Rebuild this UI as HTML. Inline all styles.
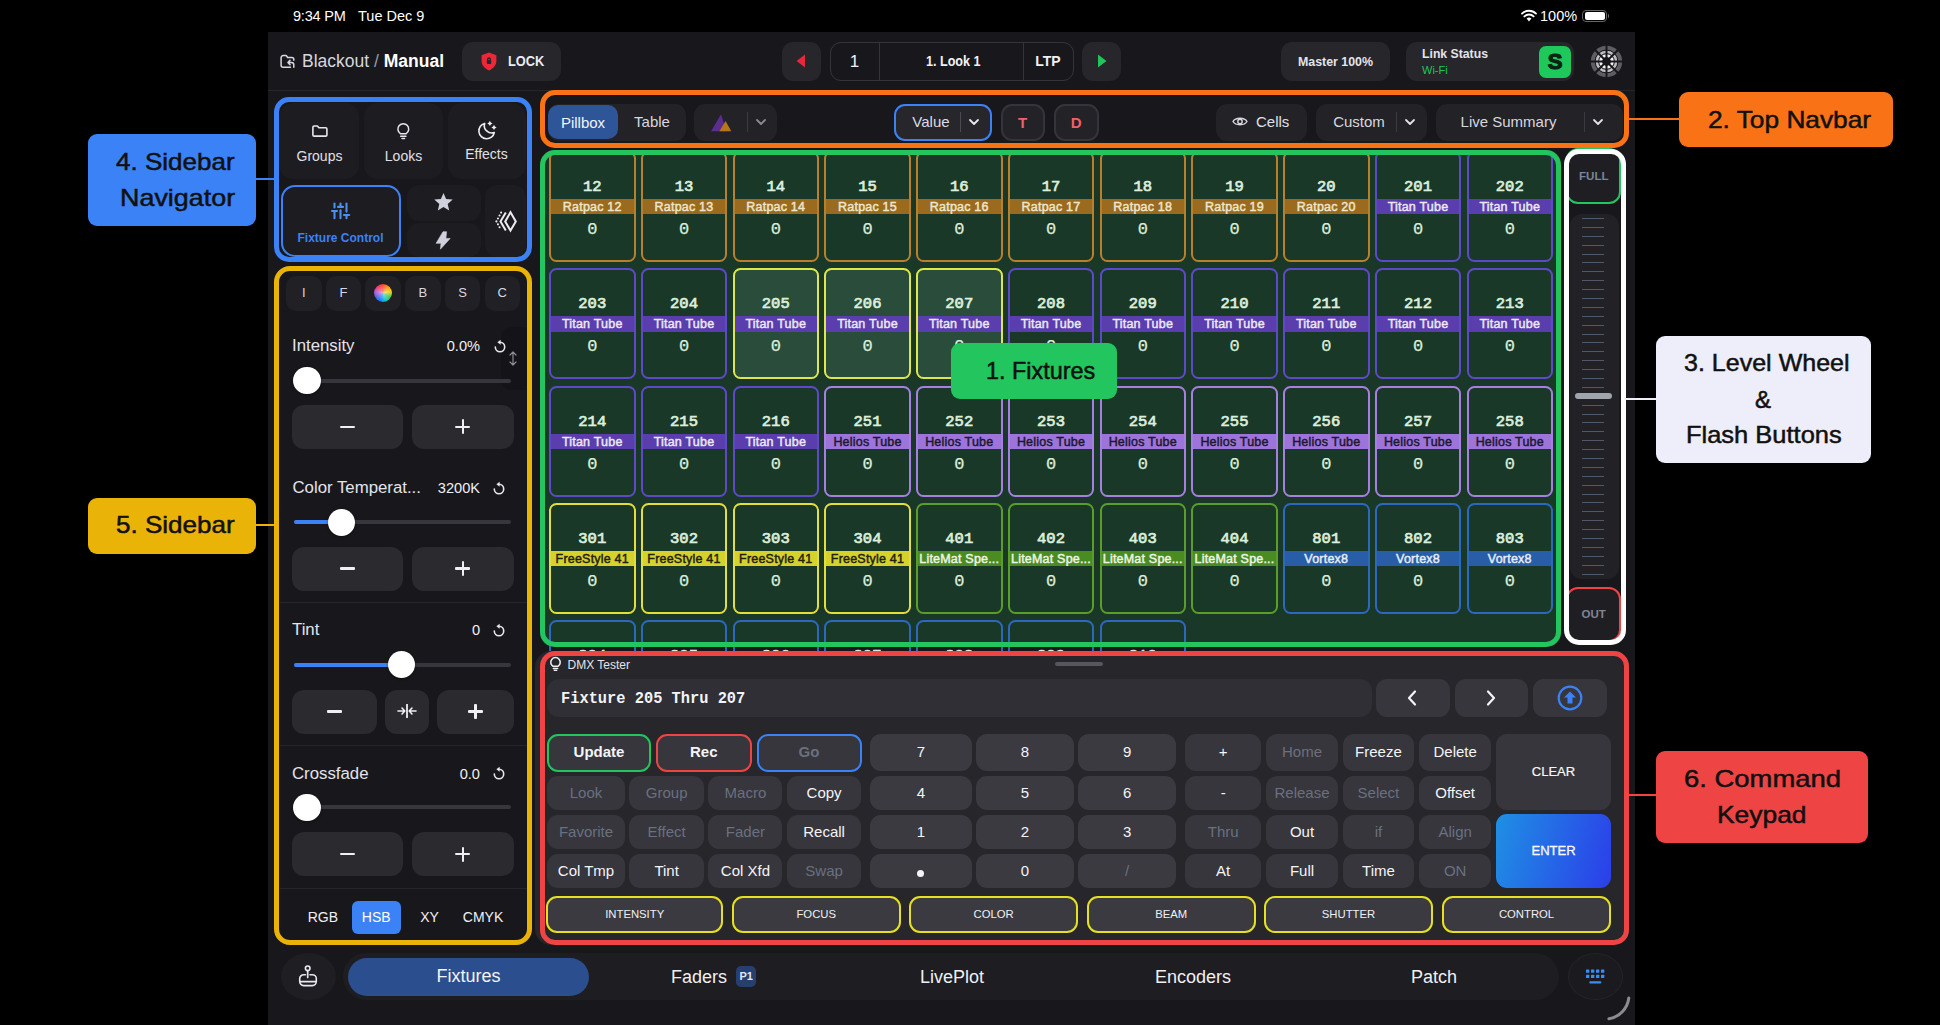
<!DOCTYPE html><html><head><meta charset="utf-8"><style>
*{margin:0;padding:0;box-sizing:border-box}
html,body{width:1940px;height:1025px;overflow:hidden;background:#000;font-family:"Liberation Sans",sans-serif;color:#fff;-webkit-font-smoothing:antialiased}
.a{position:absolute;box-sizing:border-box}
.c{display:flex;align-items:center;justify-content:center;white-space:nowrap}
.l{white-space:nowrap}
.m{font-family:"Liberation Mono",monospace}
svg{position:absolute;overflow:visible}
</style></head><body><div class="a l" style="left:293px;top:1.0px;height:30px;line-height:30px;font-size:14.5px;letter-spacing:-0.2px">9:34 PM</div>
<div class="a l" style="left:358px;top:1.0px;height:30px;line-height:30px;font-size:14.5px">Tue Dec 9</div>
<div class="a l" style="left:1540px;top:1.0px;height:30px;line-height:30px;font-size:14.5px">100%</div>
<svg style="left:1521px;top:9px" width="16" height="13" viewBox="0 0 16 13"><path d="M8 12.5 L5.6 9.6 A3.6 3.6 0 0 1 10.4 9.6 Z" fill="#fff"/><path d="M3.4 7.4 A6.6 6.6 0 0 1 12.6 7.4" stroke="#fff" stroke-width="1.9" fill="none" stroke-linecap="round"/><path d="M1 4.6 A10 10 0 0 1 15 4.6" stroke="#fff" stroke-width="1.9" fill="none" stroke-linecap="round"/></svg>
<div class="a" style="left:1582px;top:9.5px;width:25px;height:12.5px;border:1.3px solid #666;border-radius:4px"></div>
<div class="a" style="left:1584.5px;top:12px;width:20.0px;height:7.5px;background:#fff;border-radius:2px"></div>
<div class="a" style="left:1607.5px;top:13.5px;width:1.5px;height:4.0px;background:#666;border-radius:0 1px 1px 0"></div>
<div class="a" style="left:268px;top:32px;width:1367px;height:993px;background:#18181c"></div>
<div class="a" style="left:268px;top:90px;width:1367px;height:1px;background:#25252a"></div>
<svg style="left:279px;top:53px" width="17" height="17" viewBox="0 0 17 17"><path d="M11.5 14.3 H4.1 A2 2 0 0 1 2.1 12.3 V4.6 A2 2 0 0 1 4.1 2.6 H6.6 A1.5 1.5 0 0 1 7.8 3.2 L8.6 4.6 H12.8 A2 2 0 0 1 14.8 6.6 V7.2" stroke="#d8d8e2" stroke-width="1.5" fill="none" stroke-linejoin="round" stroke-linecap="round"/><path d="M14.8 14.3 V11.8 A2.3 2.3 0 0 0 12.5 9.5 H9 M11 7.4 L8.9 9.5 L11 11.6" stroke="#d8d8e2" stroke-width="1.5" fill="none" stroke-linecap="round" stroke-linejoin="round"/></svg>
<div class="a l" style="left:302px;top:46.0px;height:30px;line-height:30px;font-size:17.5px;color:#d6d6de">Blackout <span style="color:#9a9aa2">/</span> <b style="color:#fff">Manual</b></div>
<div class="a" style="left:462px;top:42px;width:99px;height:39px;background:#26262b;border-radius:11px"></div>
<svg style="left:481px;top:52px" width="16" height="19" viewBox="0 0 16 19"><path d="M8 0.6 L15.4 3.2 V9 C15.4 13.2 12.4 16.6 8 18.4 C3.6 16.6 0.6 13.2 0.6 9 V3.2 Z" fill="#ec2838"/><path d="M6.6 8.2 V7.4 A1.4 1.4 0 0 1 9.4 7.4 V8.2" stroke="#26262b" stroke-width="1.3" fill="none"/><rect x="5.8" y="7.9" width="4.4" height="4" rx="0.9" fill="#26262b"/></svg>
<div class="a l" style="left:507.5px;top:41.2px;height:40px;line-height:40px;font-size:14px;font-weight:bold;color:#ececf2;transform-origin:0 50%;transform:scaleX(0.9150)">LOCK</div>
<div class="a" style="left:782px;top:42px;width:39px;height:39px;background:#26262b;border-radius:11px"></div>
<svg style="left:796px;top:54px" width="10" height="14" viewBox="0 0 10 14"><path d="M9 0.5 V13.5 L0.5 7 Z" fill="#e5283a"/></svg>
<div class="a" style="left:829.5px;top:42px;width:244.5px;height:39px;border:1.2px solid #34343a;border-radius:11px"></div>
<div class="a" style="left:878.6px;top:42px;width:1.1999999999999318px;height:39px;background:#34343a"></div>
<div class="a" style="left:1023px;top:42px;width:1.2000000000000455px;height:39px;background:#34343a"></div>
<div class="a l" style="left:704.6px;width:300px;text-align:center;top:46.5px;height:30px;line-height:30px;font-size:17px;color:#f0f0f4">1</div>
<div class="a l" style="left:926px;top:41.0px;height:40px;line-height:40px;font-size:14px;font-weight:bold;color:#f0f0f4;transform-origin:0 50%;transform:scaleX(0.8980)">1. Look 1</div>
<div class="a l" style="left:898.0px;width:300px;text-align:center;top:46.0px;height:30px;line-height:30px;font-size:14px;font-weight:bold;color:#f0f0f4">LTP</div>
<div class="a" style="left:1082px;top:42px;width:39px;height:39px;background:#26262b;border-radius:11px"></div>
<svg style="left:1097px;top:54px" width="10" height="14" viewBox="0 0 10 14"><path d="M1 0.5 V13.5 L9.5 7 Z" fill="#1fc45a"/></svg>
<div class="a" style="left:1281px;top:42px;width:109px;height:39px;background:#26262b;border-radius:11px"></div>
<div class="a l" style="left:1298px;top:41.5px;height:40px;line-height:40px;font-size:13px;font-weight:bold;color:#e4e4ea;transform-origin:0 50%;transform:scaleX(0.9520)">Master 100%</div>
<div class="a" style="left:1406px;top:42px;width:168px;height:39px;background:#26262b;border-radius:11px"></div>
<div class="a l" style="left:1421.5px;top:46.3px;height:16px;line-height:16px;font-size:13px;font-weight:bold;color:#e4e4ea;transform-origin:0 50%;transform:scaleX(0.9418)">Link Status</div>
<div class="a l" style="left:1422px;top:63.0px;height:14px;line-height:14px;font-size:11px;color:#22c55e">Wi-Fi</div>
<div class="a c" style="left:1539px;top:45.5px;width:32px;height:32.0px;background:#1ec85a;border-radius:7px;font-size:22px;font-weight:bold;color:#0a2414;-webkit-text-stroke:1.2px #0a2414;padding-top:1px">S</div>
<svg style="left:1590px;top:45px" width="33" height="33" viewBox="0 0 33 33">
<circle cx="16.5" cy="16.5" r="13.6" fill="none" stroke="#5e5e62" stroke-width="4.2"/>
<circle cx="16.5" cy="16.5" r="9.6" fill="none" stroke="#bdbdc2" stroke-width="3.2"/>
<circle cx="16.5" cy="16.5" r="6" fill="none" stroke="#f4f4f6" stroke-width="3.2"/>
<g stroke="#18181c" stroke-width="2">
<line x1="16.5" y1="0" x2="16.5" y2="33"/><line x1="0" y1="16.5" x2="33" y2="16.5"/>
<line x1="4.8" y1="4.8" x2="28.2" y2="28.2"/><line x1="28.2" y1="4.8" x2="4.8" y2="28.2"/>
</g>
<circle cx="16.5" cy="16.5" r="11.4" fill="none" stroke="#18181c" stroke-width="1"/>
<circle cx="16.5" cy="16.5" r="7.9" fill="none" stroke="#18181c" stroke-width="0.8"/>
<circle cx="16.5" cy="16.5" r="3.8" fill="#18181c"/>
</svg>
<div class="a" style="left:548px;top:103.5px;width:138px;height:37.0px;background:#222227;border-radius:11px"></div>
<div class="a c" style="left:548px;top:105px;width:70px;height:34px;background:#2d5597;border-radius:10px;font-size:15px;color:#f2f4fa">Pillbox</div>
<div class="a l" style="left:502.0px;width:300px;text-align:center;top:107.0px;height:30px;line-height:30px;font-size:15px;color:#d8d8de">Table</div>
<div class="a" style="left:694px;top:103.5px;width:83px;height:37.0px;background:#222227;border-radius:11px"></div>
<svg style="left:710px;top:113px" width="23" height="20" viewBox="0 0 23 20"><path d="M1.1 18.2 L11 1.3 L16.6 18.2 Z" fill="#5b2d8e"/><path d="M9.4 18.2 L15.6 7.9 L21.3 18.2 Z" fill="#b8761c"/></svg>
<div class="a" style="left:746.5px;top:112px;width:1.0px;height:20px;background:#3a3a40"></div>
<svg style="left:756px;top:119px" width="10" height="6" viewBox="0 0 10 6"><path d="M1 1 L5 5 L9 1" stroke="#8a8a92" stroke-width="1.8" fill="none" stroke-linecap="round" stroke-linejoin="round"/></svg>
<div class="a" style="left:894px;top:103.5px;width:98px;height:37.0px;background:#26262b;border:2px solid #3b82f6;border-radius:11px"></div>
<div class="a l" style="left:781.0px;width:300px;text-align:center;top:107.0px;height:30px;line-height:30px;font-size:15px;color:#dcdce2">Value</div>
<div class="a" style="left:959.5px;top:112px;width:1.0px;height:20px;background:#4a4a50"></div>
<svg style="left:969px;top:119px" width="10" height="6" viewBox="0 0 10 6"><path d="M1 1 L5 5 L9 1" stroke="#e8e8ee" stroke-width="1.8" fill="none" stroke-linecap="round" stroke-linejoin="round"/></svg>
<div class="a c" style="left:1000.5px;top:103.5px;width:44.0px;height:37.0px;background:#222227;border:2px solid #34343a;border-radius:11px;font-size:15px;font-weight:bold;color:#f0606a">T</div>
<div class="a c" style="left:1053.5px;top:103.5px;width:45.5px;height:37.0px;background:#222227;border:2px solid #34343a;border-radius:11px;font-size:15px;font-weight:bold;color:#f0606a">D</div>
<div class="a" style="left:1216px;top:103.5px;width:91px;height:37.0px;background:#222227;border-radius:11px"></div>
<svg style="left:1232px;top:116px" width="16" height="11" viewBox="0 0 16 11"><path d="M1 5.5 C3.5 1.2 12.5 1.2 15 5.5 C12.5 9.8 3.5 9.8 1 5.5 Z" stroke="#d8d8de" stroke-width="1.4" fill="none"/><circle cx="8" cy="5.5" r="2.2" stroke="#d8d8de" stroke-width="1.4" fill="none"/></svg>
<div class="a l" style="left:1256px;top:107.0px;height:30px;line-height:30px;font-size:15px;color:#e0e0e6">Cells</div>
<div class="a" style="left:1316px;top:103.5px;width:111px;height:37.0px;background:#222227;border-radius:11px"></div>
<div class="a l" style="left:1209.0px;width:300px;text-align:center;top:107.0px;height:30px;line-height:30px;font-size:15px;color:#d8d8de">Custom</div>
<div class="a" style="left:1395.5px;top:112px;width:1.0px;height:20px;background:#3a3a40"></div>
<svg style="left:1405px;top:119px" width="10" height="6" viewBox="0 0 10 6"><path d="M1 1 L5 5 L9 1" stroke="#e0e0e6" stroke-width="1.8" fill="none" stroke-linecap="round" stroke-linejoin="round"/></svg>
<div class="a" style="left:1436px;top:103.5px;width:187px;height:37.0px;background:#222227;border-radius:11px"></div>
<div class="a l" style="left:1358.5px;width:300px;text-align:center;top:107.0px;height:30px;line-height:30px;font-size:15px;color:#d8d8de">Live Summary</div>
<div class="a" style="left:1583.5px;top:112px;width:1.0px;height:20px;background:#3a3a40"></div>
<svg style="left:1593px;top:119px" width="10" height="6" viewBox="0 0 10 6"><path d="M1 1 L5 5 L9 1" stroke="#e0e0e6" stroke-width="1.8" fill="none" stroke-linecap="round" stroke-linejoin="round"/></svg>
<div class="a" style="left:279px;top:103px;width:79.5px;height:76px;background:#1c1c21;border-radius:14px"></div>
<div class="a" style="left:364px;top:103px;width:79px;height:76px;background:#1c1c21;border-radius:14px"></div>
<div class="a" style="left:447.5px;top:103px;width:78.5px;height:76px;background:#1c1c21;border-radius:14px"></div>
<svg style="left:310px;top:123px" width="19" height="16" viewBox="0 0 19 16"><path d="M2.9 4.2 A1.2 1.2 0 0 1 4.1 3 H7.4 L8.9 4.8 H15.7 A1.2 1.2 0 0 1 16.9 6 V11.9 A1.2 1.2 0 0 1 15.7 13.1 H4.1 A1.2 1.2 0 0 1 2.9 11.9 Z" stroke="#e6e6ee" stroke-width="1.6" fill="none" stroke-linejoin="round"/></svg>
<div class="a l" style="left:169.5px;width:300px;text-align:center;top:140.5px;height:30px;line-height:30px;font-size:14px;color:#e0e0e6">Groups</div>
<svg style="left:395px;top:121px" width="17" height="20" viewBox="0 0 17 20"><path d="M5.4 12.7 A5.4 5.4 0 1 1 11.2 12.7 Z" stroke="#e6e6ee" stroke-width="1.5" fill="none" stroke-linejoin="round"/><path d="M5.6 15.3 H11 M7 17.5 H9.6" stroke="#e6e6ee" stroke-width="1.4" stroke-linecap="round"/></svg>
<div class="a l" style="left:253.5px;width:300px;text-align:center;top:140.5px;height:30px;line-height:30px;font-size:14px;color:#e0e0e6">Looks</div>
<svg style="left:474px;top:116px" width="26" height="26" viewBox="0 0 26 26"><path d="M10.65 7.4 A7.8 7.8 0 1 0 20.3 16.5 A7.4 7.4 0 0 1 10.65 7.4 Z" stroke="#ececf2" stroke-width="1.6" fill="none" stroke-linejoin="round"/><path d="M15.9 4.800000000000001 Q16.45 6.8500000000000005 18.5 7.4 Q16.45 7.95 15.9 10.0 Q15.35 7.95 13.3 7.4 Q15.35 6.8500000000000005 15.9 4.800000000000001 Z M20 8.8 Q20.55 10.85 22.6 11.4 Q20.55 11.950000000000001 20 14.0 Q19.45 11.950000000000001 17.4 11.4 Q19.45 10.85 20 8.8 Z" fill="#ececf2"/></svg>
<div class="a l" style="left:336.5px;width:300px;text-align:center;top:138.5px;height:30px;line-height:30px;font-size:14px;color:#e0e0e6">Effects</div>
<div class="a" style="left:280.5px;top:184.5px;width:120.0px;height:72.0px;background:#1c1c21;border:2px solid #3b82f6;border-radius:14px"></div>
<svg style="left:330px;top:202px" width="21" height="18" viewBox="0 0 21 18"><g stroke="#4a90f8" stroke-width="2.1" stroke-linecap="round"><line x1="4.5" y1="1.6" x2="4.5" y2="5.4"/><line x1="2" y1="9" x2="7" y2="9"/><line x1="4.5" y1="9" x2="4.5" y2="16.2"/><line x1="10.5" y1="1.6" x2="10.5" y2="4.8"/><line x1="8" y1="4.9" x2="13" y2="4.9"/><line x1="10.5" y1="8.4" x2="10.5" y2="16.2"/><line x1="16.5" y1="1.6" x2="16.5" y2="9.6"/><line x1="14" y1="13" x2="19.2" y2="13"/><line x1="16.5" y1="13" x2="16.5" y2="16.2"/></g></svg>
<div class="a l" style="left:190.5px;width:300px;text-align:center;top:222.5px;height:30px;line-height:30px;font-size:12px;font-weight:bold;color:#3b82f6">Fixture Control</div>
<div class="a" style="left:406.5px;top:185px;width:74.0px;height:36px;background:#1c1c21;border-radius:12px"></div>
<div class="a" style="left:406.5px;top:222.5px;width:74.0px;height:34.0px;background:#1c1c21;border-radius:12px"></div>
<svg style="left:432.5px;top:192px" width="21" height="20" viewBox="-0.5 -0.5 21 20"><path d="M10 0.5 L12.6 6.6 L19.2 7.1 L14.2 11.4 L15.7 17.9 L10 14.4 L4.3 17.9 L5.8 11.4 L0.8 7.1 L7.4 6.6 Z" fill="#d0d0dc"/></svg>
<svg style="left:434px;top:230px" width="18" height="21" viewBox="0 0 18 21"><path d="M9.0 1.7 L12.6 1.7 L11.9 8.4 L16.2 8.4 L6.4 19.2 L7.0 13.3 L2.1 13.3 Z" fill="#d0d0dc" stroke="#d0d0dc" stroke-width="0.6" stroke-linejoin="round"/></svg>
<div class="a" style="left:485px;top:185px;width:41px;height:71.5px;background:#1c1c21;border-radius:12px"></div>
<svg style="left:494px;top:210px" width="24" height="24" viewBox="0 0 24 24"><path d="M16.5 2.3 L21.8 11.4 L16.5 20.5 L11.2 11.4 Z" stroke="#ececf2" stroke-width="2" fill="none" stroke-linejoin="miter"/><path d="M11.8 2.4 L6.5 11.4 L11.8 20.4" stroke="#ececf2" stroke-width="2" fill="none"/><path d="M7.1 2.6 L2.4 11.4 L7.1 20.2" stroke="#ececf2" stroke-width="2.1" fill="none" stroke-linecap="round" stroke-dasharray="0 3.33"/></svg>
<div class="a" style="left:286.0px;top:275.5px;width:35.5px;height:35.0px;background:#202025;border-radius:10px"></div>
<div class="a l" style="left:153.75px;width:300px;text-align:center;top:278.0px;height:30px;line-height:30px;font-size:13px;color:#d8d8e0">I</div>
<div class="a" style="left:325.7px;top:275.5px;width:35.5px;height:35.0px;background:#202025;border-radius:10px"></div>
<div class="a l" style="left:193.45px;width:300px;text-align:center;top:278.0px;height:30px;line-height:30px;font-size:13px;color:#d8d8e0">F</div>
<div class="a" style="left:365.4px;top:275.5px;width:35.5px;height:35.0px;background:#202025;border-radius:10px"></div>
<div class="a" style="left:405.1px;top:275.5px;width:35.5px;height:35.0px;background:#202025;border-radius:10px"></div>
<div class="a l" style="left:272.85px;width:300px;text-align:center;top:278.0px;height:30px;line-height:30px;font-size:13px;color:#d8d8e0">B</div>
<div class="a" style="left:444.8px;top:275.5px;width:35.5px;height:35.0px;background:#202025;border-radius:10px"></div>
<div class="a l" style="left:312.55px;width:300px;text-align:center;top:278.0px;height:30px;line-height:30px;font-size:13px;color:#d8d8e0">S</div>
<div class="a" style="left:484.5px;top:275.5px;width:35.5px;height:35.0px;background:#202025;border-radius:10px"></div>
<div class="a l" style="left:352.25px;width:300px;text-align:center;top:278.0px;height:30px;line-height:30px;font-size:13px;color:#d8d8e0">C</div>
<div class="a" style="left:374px;top:284px;width:18px;height:18px;border-radius:50%;background:conic-gradient(from 0deg,#ff3b30,#ff9500,#ffcc00,#34c759,#00c7be,#007aff,#5856d6,#af52de,#ff2d55,#ff3b30)"></div>
<div class="a" style="left:374px;top:284px;width:18px;height:18px;border-radius:50%;background:radial-gradient(circle,rgba(255,255,255,0.55) 0%,rgba(255,255,255,0) 70%)"></div>
<div class="a" style="left:501px;top:327px;width:27px;height:63px;background:#141418;border-radius:10px 0 0 10px"></div>
<svg style="left:509px;top:351px" width="8" height="15" viewBox="0 0 8 15"><path d="M1 4 L4 1 L7 4 M4 1 V14 M1 11 L4 14 L7 11" stroke="#8a8a92" stroke-width="1.2" fill="none" stroke-linecap="round" stroke-linejoin="round"/></svg>
<div class="a l" style="left:292px;top:331.0px;height:30px;line-height:30px;font-size:16.8px;color:#e4e4ea">Intensity</div>
<div class="a l" style="left:280px;width:200px;text-align:right;top:331.0px;height:30px;line-height:30px;font-size:14.6px;color:#f0f0f4">0.0%</div>
<svg style="left:493.5px;top:339.5px" width="12" height="13" viewBox="0 0 12 13"><path d="M1.3 7 A4.7 4.7 0 1 0 6 2.3" stroke="#e8e8ee" stroke-width="1.6" fill="none" stroke-linecap="round"/><path d="M3.4 2.3 L6.6 -0.2 L6.6 4.8 Z" fill="#e8e8ee"/></svg>
<div class="a" style="left:294px;top:378.5px;width:217px;height:4.0px;background:#36363c;border-radius:2px"></div>
<div class="a" style="left:293.3px;top:366.8px;width:27.4px;height:27.4px;border-radius:50%;background:#fff;box-shadow:0 1px 3px rgba(0,0,0,0.4)"></div>
<div class="a" style="left:292px;top:404.5px;width:111px;height:44.5px;background:#2a2a2f;border-radius:12px"></div>
<div class="a" style="left:411.5px;top:404.5px;width:102.5px;height:44.5px;background:#2a2a2f;border-radius:12px"></div>
<div class="a" style="left:340.0px;top:425.65px;width:15px;height:2.2px;background:#f0f0f4;border-radius:1px"></div>
<div class="a" style="left:455.25px;top:425.65px;width:15px;height:2.2px;background:#f0f0f4;border-radius:1px"></div><div class="a" style="left:461.65px;top:419.25px;width:2.2px;height:15px;background:#f0f0f4;border-radius:1px"></div>
<div class="a l" style="left:292.5px;top:473.0px;height:30px;line-height:30px;font-size:16.8px;color:#e4e4ea">Color Temperat...</div>
<div class="a l" style="left:280px;width:200px;text-align:right;top:473.0px;height:30px;line-height:30px;font-size:14.6px;color:#f0f0f4">3200K</div>
<svg style="left:493px;top:481.5px" width="12" height="13" viewBox="0 0 12 13"><path d="M1.3 7 A4.7 4.7 0 1 0 6 2.3" stroke="#e8e8ee" stroke-width="1.6" fill="none" stroke-linecap="round"/><path d="M3.4 2.3 L6.6 -0.2 L6.6 4.8 Z" fill="#e8e8ee"/></svg>
<div class="a" style="left:294px;top:520.3px;width:217px;height:4.0px;background:#36363c;border-radius:2px"></div>
<div class="a" style="left:294px;top:520.3px;width:47.19999999999999px;height:4.0px;background:#3b82f6;border-radius:2px"></div>
<div class="a" style="left:327.5px;top:508.59999999999997px;width:27.4px;height:27.4px;border-radius:50%;background:#fff;box-shadow:0 1px 3px rgba(0,0,0,0.4)"></div>
<div class="a" style="left:292px;top:546.5px;width:111px;height:44.0px;background:#2a2a2f;border-radius:12px"></div>
<div class="a" style="left:411.5px;top:546.5px;width:102.5px;height:44.0px;background:#2a2a2f;border-radius:12px"></div>
<div class="a" style="left:340.0px;top:567.4px;width:15px;height:2.2px;background:#f0f0f4;border-radius:1px"></div>
<div class="a" style="left:455.25px;top:567.4px;width:15px;height:2.2px;background:#f0f0f4;border-radius:1px"></div><div class="a" style="left:461.65px;top:561.0px;width:2.2px;height:15px;background:#f0f0f4;border-radius:1px"></div>
<div class="a" style="left:280px;top:602px;width:247px;height:1px;background:#25252b"></div>
<div class="a l" style="left:292px;top:615.0px;height:30px;line-height:30px;font-size:16.8px;color:#e4e4ea">Tint</div>
<div class="a l" style="left:280px;width:200px;text-align:right;top:615.0px;height:30px;line-height:30px;font-size:14.6px;color:#f0f0f4">0</div>
<svg style="left:493px;top:623.5px" width="12" height="13" viewBox="0 0 12 13"><path d="M1.3 7 A4.7 4.7 0 1 0 6 2.3" stroke="#e8e8ee" stroke-width="1.6" fill="none" stroke-linecap="round"/><path d="M3.4 2.3 L6.6 -0.2 L6.6 4.8 Z" fill="#e8e8ee"/></svg>
<div class="a" style="left:294px;top:662.6px;width:217px;height:4.0px;background:#36363c;border-radius:2px"></div>
<div class="a" style="left:294px;top:662.6px;width:107.19999999999999px;height:4.0px;background:#3b82f6;border-radius:2px"></div>
<div class="a" style="left:387.5px;top:650.9px;width:27.4px;height:27.4px;border-radius:50%;background:#fff;box-shadow:0 1px 3px rgba(0,0,0,0.4)"></div>
<div class="a" style="left:292px;top:689.5px;width:85px;height:44.0px;background:#2a2a2f;border-radius:12px"></div>
<div class="a" style="left:385px;top:689.5px;width:43.5px;height:44.0px;background:#2a2a2f;border-radius:12px"></div>
<div class="a" style="left:437px;top:689.5px;width:77px;height:44.0px;background:#2a2a2f;border-radius:12px"></div>
<div class="a" style="left:327.0px;top:710.4px;width:15px;height:2.2px;background:#f0f0f4;border-radius:1px"></div>
<div class="a" style="left:468.0px;top:710.4px;width:15px;height:2.2px;background:#f0f0f4;border-radius:1px"></div><div class="a" style="left:474.4px;top:704.0px;width:2.2px;height:15px;background:#f0f0f4;border-radius:1px"></div>
<svg style="left:397px;top:703px" width="20" height="16" viewBox="0 0 20 16"><path d="M10 1 V15" stroke="#f0f0f4" stroke-width="1.8"/><path d="M1 8 H7.5 M5 5 L7.8 8 L5 11 M19 8 H12.5 M15 5 L12.2 8 L15 11" stroke="#f0f0f4" stroke-width="1.6" fill="none" stroke-linecap="round" stroke-linejoin="round"/></svg>
<div class="a" style="left:280px;top:745px;width:247px;height:1px;background:#25252b"></div>
<div class="a l" style="left:292px;top:758.5px;height:30px;line-height:30px;font-size:16.8px;color:#e4e4ea">Crossfade</div>
<div class="a l" style="left:280px;width:200px;text-align:right;top:758.5px;height:30px;line-height:30px;font-size:14.6px;color:#f0f0f4">0.0</div>
<svg style="left:493px;top:767px" width="12" height="13" viewBox="0 0 12 13"><path d="M1.3 7 A4.7 4.7 0 1 0 6 2.3" stroke="#e8e8ee" stroke-width="1.6" fill="none" stroke-linecap="round"/><path d="M3.4 2.3 L6.6 -0.2 L6.6 4.8 Z" fill="#e8e8ee"/></svg>
<div class="a" style="left:294px;top:805.3px;width:217px;height:4.0px;background:#36363c;border-radius:2px"></div>
<div class="a" style="left:293.3px;top:793.5999999999999px;width:27.4px;height:27.4px;border-radius:50%;background:#fff;box-shadow:0 1px 3px rgba(0,0,0,0.4)"></div>
<div class="a" style="left:292px;top:832px;width:111px;height:44px;background:#2a2a2f;border-radius:12px"></div>
<div class="a" style="left:411.5px;top:832px;width:102.5px;height:44px;background:#2a2a2f;border-radius:12px"></div>
<div class="a" style="left:340.0px;top:852.9px;width:15px;height:2.2px;background:#f0f0f4;border-radius:1px"></div>
<div class="a" style="left:455.25px;top:852.9px;width:15px;height:2.2px;background:#f0f0f4;border-radius:1px"></div><div class="a" style="left:461.65px;top:846.5px;width:2.2px;height:15px;background:#f0f0f4;border-radius:1px"></div>
<div class="a" style="left:280px;top:888px;width:247px;height:1px;background:#25252b"></div>
<div class="a l" style="left:172.8px;width:300px;text-align:center;top:901.5px;height:30px;line-height:30px;font-size:14px;color:#f0f0f4">RGB</div>
<div class="a c" style="left:351.5px;top:900.5px;width:49.5px;height:33.0px;background:#3b82f6;border-radius:6px;font-size:14px;color:#fff">HSB</div>
<div class="a l" style="left:279.5px;width:300px;text-align:center;top:901.5px;height:30px;line-height:30px;font-size:14px;color:#f0f0f4">XY</div>
<div class="a l" style="left:333.0px;width:300px;text-align:center;top:901.5px;height:30px;line-height:30px;font-size:14px;color:#f0f0f4">CMYK</div>
<div class="a" style="left:540px;top:150px;width:1021px;height:497px;background:#1a3828;border-radius:14px"></div>
<div class="a" style="left:540px;top:155px;width:1021px;height:496px;overflow:hidden">
<div class="a" style="left:9.0px;top:-4.199999999999989px;width:86.5px;height:111px;border:2px solid #b8802a;border-radius:7.5px;"><div class="a m" style="left:0;right:0;top:22px;height:24px;line-height:24px;text-align:center;font-size:15.5px;color:#dcefdc;-webkit-text-stroke:0.7px #dcefdc">12</div><div class="a" style="left:0;right:0;top:46px;height:15.4px;line-height:16.6px;text-align:center;font-size:12.5px;letter-spacing:0.2px;background:#9a6b1f;color:#ede6cc;-webkit-text-stroke:0.45px #ede6cc;white-space:nowrap;overflow:hidden">Ratpac 12</div><div class="a m" style="left:0;right:0;top:65.2px;height:24px;line-height:24px;text-align:center;font-size:17px;color:#dcefdc;-webkit-text-stroke:0.25px #dcefdc">0</div></div>
<div class="a" style="left:100.75px;top:-4.199999999999989px;width:86.5px;height:111px;border:2px solid #b8802a;border-radius:7.5px;"><div class="a m" style="left:0;right:0;top:22px;height:24px;line-height:24px;text-align:center;font-size:15.5px;color:#dcefdc;-webkit-text-stroke:0.7px #dcefdc">13</div><div class="a" style="left:0;right:0;top:46px;height:15.4px;line-height:16.6px;text-align:center;font-size:12.5px;letter-spacing:0.2px;background:#9a6b1f;color:#ede6cc;-webkit-text-stroke:0.45px #ede6cc;white-space:nowrap;overflow:hidden">Ratpac 13</div><div class="a m" style="left:0;right:0;top:65.2px;height:24px;line-height:24px;text-align:center;font-size:17px;color:#dcefdc;-webkit-text-stroke:0.25px #dcefdc">0</div></div>
<div class="a" style="left:192.5px;top:-4.199999999999989px;width:86.5px;height:111px;border:2px solid #b8802a;border-radius:7.5px;"><div class="a m" style="left:0;right:0;top:22px;height:24px;line-height:24px;text-align:center;font-size:15.5px;color:#dcefdc;-webkit-text-stroke:0.7px #dcefdc">14</div><div class="a" style="left:0;right:0;top:46px;height:15.4px;line-height:16.6px;text-align:center;font-size:12.5px;letter-spacing:0.2px;background:#9a6b1f;color:#ede6cc;-webkit-text-stroke:0.45px #ede6cc;white-space:nowrap;overflow:hidden">Ratpac 14</div><div class="a m" style="left:0;right:0;top:65.2px;height:24px;line-height:24px;text-align:center;font-size:17px;color:#dcefdc;-webkit-text-stroke:0.25px #dcefdc">0</div></div>
<div class="a" style="left:284.25px;top:-4.199999999999989px;width:86.5px;height:111px;border:2px solid #b8802a;border-radius:7.5px;"><div class="a m" style="left:0;right:0;top:22px;height:24px;line-height:24px;text-align:center;font-size:15.5px;color:#dcefdc;-webkit-text-stroke:0.7px #dcefdc">15</div><div class="a" style="left:0;right:0;top:46px;height:15.4px;line-height:16.6px;text-align:center;font-size:12.5px;letter-spacing:0.2px;background:#9a6b1f;color:#ede6cc;-webkit-text-stroke:0.45px #ede6cc;white-space:nowrap;overflow:hidden">Ratpac 15</div><div class="a m" style="left:0;right:0;top:65.2px;height:24px;line-height:24px;text-align:center;font-size:17px;color:#dcefdc;-webkit-text-stroke:0.25px #dcefdc">0</div></div>
<div class="a" style="left:376.0px;top:-4.199999999999989px;width:86.5px;height:111px;border:2px solid #b8802a;border-radius:7.5px;"><div class="a m" style="left:0;right:0;top:22px;height:24px;line-height:24px;text-align:center;font-size:15.5px;color:#dcefdc;-webkit-text-stroke:0.7px #dcefdc">16</div><div class="a" style="left:0;right:0;top:46px;height:15.4px;line-height:16.6px;text-align:center;font-size:12.5px;letter-spacing:0.2px;background:#9a6b1f;color:#ede6cc;-webkit-text-stroke:0.45px #ede6cc;white-space:nowrap;overflow:hidden">Ratpac 16</div><div class="a m" style="left:0;right:0;top:65.2px;height:24px;line-height:24px;text-align:center;font-size:17px;color:#dcefdc;-webkit-text-stroke:0.25px #dcefdc">0</div></div>
<div class="a" style="left:467.75px;top:-4.199999999999989px;width:86.5px;height:111px;border:2px solid #b8802a;border-radius:7.5px;"><div class="a m" style="left:0;right:0;top:22px;height:24px;line-height:24px;text-align:center;font-size:15.5px;color:#dcefdc;-webkit-text-stroke:0.7px #dcefdc">17</div><div class="a" style="left:0;right:0;top:46px;height:15.4px;line-height:16.6px;text-align:center;font-size:12.5px;letter-spacing:0.2px;background:#9a6b1f;color:#ede6cc;-webkit-text-stroke:0.45px #ede6cc;white-space:nowrap;overflow:hidden">Ratpac 17</div><div class="a m" style="left:0;right:0;top:65.2px;height:24px;line-height:24px;text-align:center;font-size:17px;color:#dcefdc;-webkit-text-stroke:0.25px #dcefdc">0</div></div>
<div class="a" style="left:559.5px;top:-4.199999999999989px;width:86.5px;height:111px;border:2px solid #b8802a;border-radius:7.5px;"><div class="a m" style="left:0;right:0;top:22px;height:24px;line-height:24px;text-align:center;font-size:15.5px;color:#dcefdc;-webkit-text-stroke:0.7px #dcefdc">18</div><div class="a" style="left:0;right:0;top:46px;height:15.4px;line-height:16.6px;text-align:center;font-size:12.5px;letter-spacing:0.2px;background:#9a6b1f;color:#ede6cc;-webkit-text-stroke:0.45px #ede6cc;white-space:nowrap;overflow:hidden">Ratpac 18</div><div class="a m" style="left:0;right:0;top:65.2px;height:24px;line-height:24px;text-align:center;font-size:17px;color:#dcefdc;-webkit-text-stroke:0.25px #dcefdc">0</div></div>
<div class="a" style="left:651.25px;top:-4.199999999999989px;width:86.5px;height:111px;border:2px solid #b8802a;border-radius:7.5px;"><div class="a m" style="left:0;right:0;top:22px;height:24px;line-height:24px;text-align:center;font-size:15.5px;color:#dcefdc;-webkit-text-stroke:0.7px #dcefdc">19</div><div class="a" style="left:0;right:0;top:46px;height:15.4px;line-height:16.6px;text-align:center;font-size:12.5px;letter-spacing:0.2px;background:#9a6b1f;color:#ede6cc;-webkit-text-stroke:0.45px #ede6cc;white-space:nowrap;overflow:hidden">Ratpac 19</div><div class="a m" style="left:0;right:0;top:65.2px;height:24px;line-height:24px;text-align:center;font-size:17px;color:#dcefdc;-webkit-text-stroke:0.25px #dcefdc">0</div></div>
<div class="a" style="left:743.0px;top:-4.199999999999989px;width:86.5px;height:111px;border:2px solid #b8802a;border-radius:7.5px;"><div class="a m" style="left:0;right:0;top:22px;height:24px;line-height:24px;text-align:center;font-size:15.5px;color:#dcefdc;-webkit-text-stroke:0.7px #dcefdc">20</div><div class="a" style="left:0;right:0;top:46px;height:15.4px;line-height:16.6px;text-align:center;font-size:12.5px;letter-spacing:0.2px;background:#9a6b1f;color:#ede6cc;-webkit-text-stroke:0.45px #ede6cc;white-space:nowrap;overflow:hidden">Ratpac 20</div><div class="a m" style="left:0;right:0;top:65.2px;height:24px;line-height:24px;text-align:center;font-size:17px;color:#dcefdc;-webkit-text-stroke:0.25px #dcefdc">0</div></div>
<div class="a" style="left:834.75px;top:-4.199999999999989px;width:86.5px;height:111px;border:2px solid #5e4ac8;border-radius:7.5px;"><div class="a m" style="left:0;right:0;top:22px;height:24px;line-height:24px;text-align:center;font-size:15.5px;color:#dcefdc;-webkit-text-stroke:0.7px #dcefdc">201</div><div class="a" style="left:0;right:0;top:46px;height:15.4px;line-height:16.6px;text-align:center;font-size:12.5px;letter-spacing:0.2px;background:#5a3eae;color:#ece8f6;-webkit-text-stroke:0.45px #ece8f6;white-space:nowrap;overflow:hidden">Titan Tube</div><div class="a m" style="left:0;right:0;top:65.2px;height:24px;line-height:24px;text-align:center;font-size:17px;color:#dcefdc;-webkit-text-stroke:0.25px #dcefdc">0</div></div>
<div class="a" style="left:926.5px;top:-4.199999999999989px;width:86.5px;height:111px;border:2px solid #5e4ac8;border-radius:7.5px;"><div class="a m" style="left:0;right:0;top:22px;height:24px;line-height:24px;text-align:center;font-size:15.5px;color:#dcefdc;-webkit-text-stroke:0.7px #dcefdc">202</div><div class="a" style="left:0;right:0;top:46px;height:15.4px;line-height:16.6px;text-align:center;font-size:12.5px;letter-spacing:0.2px;background:#5a3eae;color:#ece8f6;-webkit-text-stroke:0.45px #ece8f6;white-space:nowrap;overflow:hidden">Titan Tube</div><div class="a m" style="left:0;right:0;top:65.2px;height:24px;line-height:24px;text-align:center;font-size:17px;color:#dcefdc;-webkit-text-stroke:0.25px #dcefdc">0</div></div>
<div class="a" style="left:9.0px;top:113.14999999999998px;width:86.5px;height:111px;border:2px solid #5e4ac8;border-radius:7.5px;"><div class="a m" style="left:0;right:0;top:22px;height:24px;line-height:24px;text-align:center;font-size:15.5px;color:#dcefdc;-webkit-text-stroke:0.7px #dcefdc">203</div><div class="a" style="left:0;right:0;top:46px;height:15.4px;line-height:16.6px;text-align:center;font-size:12.5px;letter-spacing:0.2px;background:#5a3eae;color:#ece8f6;-webkit-text-stroke:0.45px #ece8f6;white-space:nowrap;overflow:hidden">Titan Tube</div><div class="a m" style="left:0;right:0;top:65.2px;height:24px;line-height:24px;text-align:center;font-size:17px;color:#dcefdc;-webkit-text-stroke:0.25px #dcefdc">0</div></div>
<div class="a" style="left:100.75px;top:113.14999999999998px;width:86.5px;height:111px;border:2px solid #5e4ac8;border-radius:7.5px;"><div class="a m" style="left:0;right:0;top:22px;height:24px;line-height:24px;text-align:center;font-size:15.5px;color:#dcefdc;-webkit-text-stroke:0.7px #dcefdc">204</div><div class="a" style="left:0;right:0;top:46px;height:15.4px;line-height:16.6px;text-align:center;font-size:12.5px;letter-spacing:0.2px;background:#5a3eae;color:#ece8f6;-webkit-text-stroke:0.45px #ece8f6;white-space:nowrap;overflow:hidden">Titan Tube</div><div class="a m" style="left:0;right:0;top:65.2px;height:24px;line-height:24px;text-align:center;font-size:17px;color:#dcefdc;-webkit-text-stroke:0.25px #dcefdc">0</div></div>
<div class="a" style="left:192.5px;top:113.14999999999998px;width:86.5px;height:111px;border:2px solid #dde64a;border-radius:7.5px;background:#2a4c3a;"><div class="a m" style="left:0;right:0;top:22px;height:24px;line-height:24px;text-align:center;font-size:15.5px;color:#dcefdc;-webkit-text-stroke:0.7px #dcefdc">205</div><div class="a" style="left:0;right:0;top:46px;height:15.4px;line-height:16.6px;text-align:center;font-size:12.5px;letter-spacing:0.2px;background:#5a3eae;color:#ece8f6;-webkit-text-stroke:0.45px #ece8f6;white-space:nowrap;overflow:hidden">Titan Tube</div><div class="a m" style="left:0;right:0;top:65.2px;height:24px;line-height:24px;text-align:center;font-size:17px;color:#dcefdc;-webkit-text-stroke:0.25px #dcefdc">0</div></div>
<div class="a" style="left:284.25px;top:113.14999999999998px;width:86.5px;height:111px;border:2px solid #dde64a;border-radius:7.5px;background:#2a4c3a;"><div class="a m" style="left:0;right:0;top:22px;height:24px;line-height:24px;text-align:center;font-size:15.5px;color:#dcefdc;-webkit-text-stroke:0.7px #dcefdc">206</div><div class="a" style="left:0;right:0;top:46px;height:15.4px;line-height:16.6px;text-align:center;font-size:12.5px;letter-spacing:0.2px;background:#5a3eae;color:#ece8f6;-webkit-text-stroke:0.45px #ece8f6;white-space:nowrap;overflow:hidden">Titan Tube</div><div class="a m" style="left:0;right:0;top:65.2px;height:24px;line-height:24px;text-align:center;font-size:17px;color:#dcefdc;-webkit-text-stroke:0.25px #dcefdc">0</div></div>
<div class="a" style="left:376.0px;top:113.14999999999998px;width:86.5px;height:111px;border:2px solid #dde64a;border-radius:7.5px;background:#2a4c3a;"><div class="a m" style="left:0;right:0;top:22px;height:24px;line-height:24px;text-align:center;font-size:15.5px;color:#dcefdc;-webkit-text-stroke:0.7px #dcefdc">207</div><div class="a" style="left:0;right:0;top:46px;height:15.4px;line-height:16.6px;text-align:center;font-size:12.5px;letter-spacing:0.2px;background:#5a3eae;color:#ece8f6;-webkit-text-stroke:0.45px #ece8f6;white-space:nowrap;overflow:hidden">Titan Tube</div><div class="a m" style="left:0;right:0;top:65.2px;height:24px;line-height:24px;text-align:center;font-size:17px;color:#dcefdc;-webkit-text-stroke:0.25px #dcefdc">0</div></div>
<div class="a" style="left:467.75px;top:113.14999999999998px;width:86.5px;height:111px;border:2px solid #5e4ac8;border-radius:7.5px;"><div class="a m" style="left:0;right:0;top:22px;height:24px;line-height:24px;text-align:center;font-size:15.5px;color:#dcefdc;-webkit-text-stroke:0.7px #dcefdc">208</div><div class="a" style="left:0;right:0;top:46px;height:15.4px;line-height:16.6px;text-align:center;font-size:12.5px;letter-spacing:0.2px;background:#5a3eae;color:#ece8f6;-webkit-text-stroke:0.45px #ece8f6;white-space:nowrap;overflow:hidden">Titan Tube</div><div class="a m" style="left:0;right:0;top:65.2px;height:24px;line-height:24px;text-align:center;font-size:17px;color:#dcefdc;-webkit-text-stroke:0.25px #dcefdc">0</div></div>
<div class="a" style="left:559.5px;top:113.14999999999998px;width:86.5px;height:111px;border:2px solid #5e4ac8;border-radius:7.5px;"><div class="a m" style="left:0;right:0;top:22px;height:24px;line-height:24px;text-align:center;font-size:15.5px;color:#dcefdc;-webkit-text-stroke:0.7px #dcefdc">209</div><div class="a" style="left:0;right:0;top:46px;height:15.4px;line-height:16.6px;text-align:center;font-size:12.5px;letter-spacing:0.2px;background:#5a3eae;color:#ece8f6;-webkit-text-stroke:0.45px #ece8f6;white-space:nowrap;overflow:hidden">Titan Tube</div><div class="a m" style="left:0;right:0;top:65.2px;height:24px;line-height:24px;text-align:center;font-size:17px;color:#dcefdc;-webkit-text-stroke:0.25px #dcefdc">0</div></div>
<div class="a" style="left:651.25px;top:113.14999999999998px;width:86.5px;height:111px;border:2px solid #5e4ac8;border-radius:7.5px;"><div class="a m" style="left:0;right:0;top:22px;height:24px;line-height:24px;text-align:center;font-size:15.5px;color:#dcefdc;-webkit-text-stroke:0.7px #dcefdc">210</div><div class="a" style="left:0;right:0;top:46px;height:15.4px;line-height:16.6px;text-align:center;font-size:12.5px;letter-spacing:0.2px;background:#5a3eae;color:#ece8f6;-webkit-text-stroke:0.45px #ece8f6;white-space:nowrap;overflow:hidden">Titan Tube</div><div class="a m" style="left:0;right:0;top:65.2px;height:24px;line-height:24px;text-align:center;font-size:17px;color:#dcefdc;-webkit-text-stroke:0.25px #dcefdc">0</div></div>
<div class="a" style="left:743.0px;top:113.14999999999998px;width:86.5px;height:111px;border:2px solid #5e4ac8;border-radius:7.5px;"><div class="a m" style="left:0;right:0;top:22px;height:24px;line-height:24px;text-align:center;font-size:15.5px;color:#dcefdc;-webkit-text-stroke:0.7px #dcefdc">211</div><div class="a" style="left:0;right:0;top:46px;height:15.4px;line-height:16.6px;text-align:center;font-size:12.5px;letter-spacing:0.2px;background:#5a3eae;color:#ece8f6;-webkit-text-stroke:0.45px #ece8f6;white-space:nowrap;overflow:hidden">Titan Tube</div><div class="a m" style="left:0;right:0;top:65.2px;height:24px;line-height:24px;text-align:center;font-size:17px;color:#dcefdc;-webkit-text-stroke:0.25px #dcefdc">0</div></div>
<div class="a" style="left:834.75px;top:113.14999999999998px;width:86.5px;height:111px;border:2px solid #5e4ac8;border-radius:7.5px;"><div class="a m" style="left:0;right:0;top:22px;height:24px;line-height:24px;text-align:center;font-size:15.5px;color:#dcefdc;-webkit-text-stroke:0.7px #dcefdc">212</div><div class="a" style="left:0;right:0;top:46px;height:15.4px;line-height:16.6px;text-align:center;font-size:12.5px;letter-spacing:0.2px;background:#5a3eae;color:#ece8f6;-webkit-text-stroke:0.45px #ece8f6;white-space:nowrap;overflow:hidden">Titan Tube</div><div class="a m" style="left:0;right:0;top:65.2px;height:24px;line-height:24px;text-align:center;font-size:17px;color:#dcefdc;-webkit-text-stroke:0.25px #dcefdc">0</div></div>
<div class="a" style="left:926.5px;top:113.14999999999998px;width:86.5px;height:111px;border:2px solid #5e4ac8;border-radius:7.5px;"><div class="a m" style="left:0;right:0;top:22px;height:24px;line-height:24px;text-align:center;font-size:15.5px;color:#dcefdc;-webkit-text-stroke:0.7px #dcefdc">213</div><div class="a" style="left:0;right:0;top:46px;height:15.4px;line-height:16.6px;text-align:center;font-size:12.5px;letter-spacing:0.2px;background:#5a3eae;color:#ece8f6;-webkit-text-stroke:0.45px #ece8f6;white-space:nowrap;overflow:hidden">Titan Tube</div><div class="a m" style="left:0;right:0;top:65.2px;height:24px;line-height:24px;text-align:center;font-size:17px;color:#dcefdc;-webkit-text-stroke:0.25px #dcefdc">0</div></div>
<div class="a" style="left:9.0px;top:230.5px;width:86.5px;height:111px;border:2px solid #5e4ac8;border-radius:7.5px;"><div class="a m" style="left:0;right:0;top:22px;height:24px;line-height:24px;text-align:center;font-size:15.5px;color:#dcefdc;-webkit-text-stroke:0.7px #dcefdc">214</div><div class="a" style="left:0;right:0;top:46px;height:15.4px;line-height:16.6px;text-align:center;font-size:12.5px;letter-spacing:0.2px;background:#5a3eae;color:#ece8f6;-webkit-text-stroke:0.45px #ece8f6;white-space:nowrap;overflow:hidden">Titan Tube</div><div class="a m" style="left:0;right:0;top:65.2px;height:24px;line-height:24px;text-align:center;font-size:17px;color:#dcefdc;-webkit-text-stroke:0.25px #dcefdc">0</div></div>
<div class="a" style="left:100.75px;top:230.5px;width:86.5px;height:111px;border:2px solid #5e4ac8;border-radius:7.5px;"><div class="a m" style="left:0;right:0;top:22px;height:24px;line-height:24px;text-align:center;font-size:15.5px;color:#dcefdc;-webkit-text-stroke:0.7px #dcefdc">215</div><div class="a" style="left:0;right:0;top:46px;height:15.4px;line-height:16.6px;text-align:center;font-size:12.5px;letter-spacing:0.2px;background:#5a3eae;color:#ece8f6;-webkit-text-stroke:0.45px #ece8f6;white-space:nowrap;overflow:hidden">Titan Tube</div><div class="a m" style="left:0;right:0;top:65.2px;height:24px;line-height:24px;text-align:center;font-size:17px;color:#dcefdc;-webkit-text-stroke:0.25px #dcefdc">0</div></div>
<div class="a" style="left:192.5px;top:230.5px;width:86.5px;height:111px;border:2px solid #5e4ac8;border-radius:7.5px;"><div class="a m" style="left:0;right:0;top:22px;height:24px;line-height:24px;text-align:center;font-size:15.5px;color:#dcefdc;-webkit-text-stroke:0.7px #dcefdc">216</div><div class="a" style="left:0;right:0;top:46px;height:15.4px;line-height:16.6px;text-align:center;font-size:12.5px;letter-spacing:0.2px;background:#5a3eae;color:#ece8f6;-webkit-text-stroke:0.45px #ece8f6;white-space:nowrap;overflow:hidden">Titan Tube</div><div class="a m" style="left:0;right:0;top:65.2px;height:24px;line-height:24px;text-align:center;font-size:17px;color:#dcefdc;-webkit-text-stroke:0.25px #dcefdc">0</div></div>
<div class="a" style="left:284.25px;top:230.5px;width:86.5px;height:111px;border:2px solid #a67fe0;border-radius:7.5px;"><div class="a m" style="left:0;right:0;top:22px;height:24px;line-height:24px;text-align:center;font-size:15.5px;color:#dcefdc;-webkit-text-stroke:0.7px #dcefdc">251</div><div class="a" style="left:0;right:0;top:46px;height:15.4px;line-height:16.6px;text-align:center;font-size:12.5px;letter-spacing:0.2px;background:#9d74da;color:#1c1830;-webkit-text-stroke:0.45px #1c1830;white-space:nowrap;overflow:hidden">Helios Tube</div><div class="a m" style="left:0;right:0;top:65.2px;height:24px;line-height:24px;text-align:center;font-size:17px;color:#dcefdc;-webkit-text-stroke:0.25px #dcefdc">0</div></div>
<div class="a" style="left:376.0px;top:230.5px;width:86.5px;height:111px;border:2px solid #a67fe0;border-radius:7.5px;"><div class="a m" style="left:0;right:0;top:22px;height:24px;line-height:24px;text-align:center;font-size:15.5px;color:#dcefdc;-webkit-text-stroke:0.7px #dcefdc">252</div><div class="a" style="left:0;right:0;top:46px;height:15.4px;line-height:16.6px;text-align:center;font-size:12.5px;letter-spacing:0.2px;background:#9d74da;color:#1c1830;-webkit-text-stroke:0.45px #1c1830;white-space:nowrap;overflow:hidden">Helios Tube</div><div class="a m" style="left:0;right:0;top:65.2px;height:24px;line-height:24px;text-align:center;font-size:17px;color:#dcefdc;-webkit-text-stroke:0.25px #dcefdc">0</div></div>
<div class="a" style="left:467.75px;top:230.5px;width:86.5px;height:111px;border:2px solid #a67fe0;border-radius:7.5px;"><div class="a m" style="left:0;right:0;top:22px;height:24px;line-height:24px;text-align:center;font-size:15.5px;color:#dcefdc;-webkit-text-stroke:0.7px #dcefdc">253</div><div class="a" style="left:0;right:0;top:46px;height:15.4px;line-height:16.6px;text-align:center;font-size:12.5px;letter-spacing:0.2px;background:#9d74da;color:#1c1830;-webkit-text-stroke:0.45px #1c1830;white-space:nowrap;overflow:hidden">Helios Tube</div><div class="a m" style="left:0;right:0;top:65.2px;height:24px;line-height:24px;text-align:center;font-size:17px;color:#dcefdc;-webkit-text-stroke:0.25px #dcefdc">0</div></div>
<div class="a" style="left:559.5px;top:230.5px;width:86.5px;height:111px;border:2px solid #a67fe0;border-radius:7.5px;"><div class="a m" style="left:0;right:0;top:22px;height:24px;line-height:24px;text-align:center;font-size:15.5px;color:#dcefdc;-webkit-text-stroke:0.7px #dcefdc">254</div><div class="a" style="left:0;right:0;top:46px;height:15.4px;line-height:16.6px;text-align:center;font-size:12.5px;letter-spacing:0.2px;background:#9d74da;color:#1c1830;-webkit-text-stroke:0.45px #1c1830;white-space:nowrap;overflow:hidden">Helios Tube</div><div class="a m" style="left:0;right:0;top:65.2px;height:24px;line-height:24px;text-align:center;font-size:17px;color:#dcefdc;-webkit-text-stroke:0.25px #dcefdc">0</div></div>
<div class="a" style="left:651.25px;top:230.5px;width:86.5px;height:111px;border:2px solid #a67fe0;border-radius:7.5px;"><div class="a m" style="left:0;right:0;top:22px;height:24px;line-height:24px;text-align:center;font-size:15.5px;color:#dcefdc;-webkit-text-stroke:0.7px #dcefdc">255</div><div class="a" style="left:0;right:0;top:46px;height:15.4px;line-height:16.6px;text-align:center;font-size:12.5px;letter-spacing:0.2px;background:#9d74da;color:#1c1830;-webkit-text-stroke:0.45px #1c1830;white-space:nowrap;overflow:hidden">Helios Tube</div><div class="a m" style="left:0;right:0;top:65.2px;height:24px;line-height:24px;text-align:center;font-size:17px;color:#dcefdc;-webkit-text-stroke:0.25px #dcefdc">0</div></div>
<div class="a" style="left:743.0px;top:230.5px;width:86.5px;height:111px;border:2px solid #a67fe0;border-radius:7.5px;"><div class="a m" style="left:0;right:0;top:22px;height:24px;line-height:24px;text-align:center;font-size:15.5px;color:#dcefdc;-webkit-text-stroke:0.7px #dcefdc">256</div><div class="a" style="left:0;right:0;top:46px;height:15.4px;line-height:16.6px;text-align:center;font-size:12.5px;letter-spacing:0.2px;background:#9d74da;color:#1c1830;-webkit-text-stroke:0.45px #1c1830;white-space:nowrap;overflow:hidden">Helios Tube</div><div class="a m" style="left:0;right:0;top:65.2px;height:24px;line-height:24px;text-align:center;font-size:17px;color:#dcefdc;-webkit-text-stroke:0.25px #dcefdc">0</div></div>
<div class="a" style="left:834.75px;top:230.5px;width:86.5px;height:111px;border:2px solid #a67fe0;border-radius:7.5px;"><div class="a m" style="left:0;right:0;top:22px;height:24px;line-height:24px;text-align:center;font-size:15.5px;color:#dcefdc;-webkit-text-stroke:0.7px #dcefdc">257</div><div class="a" style="left:0;right:0;top:46px;height:15.4px;line-height:16.6px;text-align:center;font-size:12.5px;letter-spacing:0.2px;background:#9d74da;color:#1c1830;-webkit-text-stroke:0.45px #1c1830;white-space:nowrap;overflow:hidden">Helios Tube</div><div class="a m" style="left:0;right:0;top:65.2px;height:24px;line-height:24px;text-align:center;font-size:17px;color:#dcefdc;-webkit-text-stroke:0.25px #dcefdc">0</div></div>
<div class="a" style="left:926.5px;top:230.5px;width:86.5px;height:111px;border:2px solid #a67fe0;border-radius:7.5px;"><div class="a m" style="left:0;right:0;top:22px;height:24px;line-height:24px;text-align:center;font-size:15.5px;color:#dcefdc;-webkit-text-stroke:0.7px #dcefdc">258</div><div class="a" style="left:0;right:0;top:46px;height:15.4px;line-height:16.6px;text-align:center;font-size:12.5px;letter-spacing:0.2px;background:#9d74da;color:#1c1830;-webkit-text-stroke:0.45px #1c1830;white-space:nowrap;overflow:hidden">Helios Tube</div><div class="a m" style="left:0;right:0;top:65.2px;height:24px;line-height:24px;text-align:center;font-size:17px;color:#dcefdc;-webkit-text-stroke:0.25px #dcefdc">0</div></div>
<div class="a" style="left:9.0px;top:347.84999999999997px;width:86.5px;height:111px;border:2px solid #e2de3a;border-radius:7.5px;"><div class="a m" style="left:0;right:0;top:22px;height:24px;line-height:24px;text-align:center;font-size:15.5px;color:#dcefdc;-webkit-text-stroke:0.7px #dcefdc">301</div><div class="a" style="left:0;right:0;top:46px;height:15.4px;line-height:16.6px;text-align:center;font-size:12.5px;letter-spacing:0.2px;background:#d6d22c;color:#1e2010;-webkit-text-stroke:0.45px #1e2010;white-space:nowrap;overflow:hidden">FreeStyle 41</div><div class="a m" style="left:0;right:0;top:65.2px;height:24px;line-height:24px;text-align:center;font-size:17px;color:#dcefdc;-webkit-text-stroke:0.25px #dcefdc">0</div></div>
<div class="a" style="left:100.75px;top:347.84999999999997px;width:86.5px;height:111px;border:2px solid #e2de3a;border-radius:7.5px;"><div class="a m" style="left:0;right:0;top:22px;height:24px;line-height:24px;text-align:center;font-size:15.5px;color:#dcefdc;-webkit-text-stroke:0.7px #dcefdc">302</div><div class="a" style="left:0;right:0;top:46px;height:15.4px;line-height:16.6px;text-align:center;font-size:12.5px;letter-spacing:0.2px;background:#d6d22c;color:#1e2010;-webkit-text-stroke:0.45px #1e2010;white-space:nowrap;overflow:hidden">FreeStyle 41</div><div class="a m" style="left:0;right:0;top:65.2px;height:24px;line-height:24px;text-align:center;font-size:17px;color:#dcefdc;-webkit-text-stroke:0.25px #dcefdc">0</div></div>
<div class="a" style="left:192.5px;top:347.84999999999997px;width:86.5px;height:111px;border:2px solid #e2de3a;border-radius:7.5px;"><div class="a m" style="left:0;right:0;top:22px;height:24px;line-height:24px;text-align:center;font-size:15.5px;color:#dcefdc;-webkit-text-stroke:0.7px #dcefdc">303</div><div class="a" style="left:0;right:0;top:46px;height:15.4px;line-height:16.6px;text-align:center;font-size:12.5px;letter-spacing:0.2px;background:#d6d22c;color:#1e2010;-webkit-text-stroke:0.45px #1e2010;white-space:nowrap;overflow:hidden">FreeStyle 41</div><div class="a m" style="left:0;right:0;top:65.2px;height:24px;line-height:24px;text-align:center;font-size:17px;color:#dcefdc;-webkit-text-stroke:0.25px #dcefdc">0</div></div>
<div class="a" style="left:284.25px;top:347.84999999999997px;width:86.5px;height:111px;border:2px solid #e2de3a;border-radius:7.5px;"><div class="a m" style="left:0;right:0;top:22px;height:24px;line-height:24px;text-align:center;font-size:15.5px;color:#dcefdc;-webkit-text-stroke:0.7px #dcefdc">304</div><div class="a" style="left:0;right:0;top:46px;height:15.4px;line-height:16.6px;text-align:center;font-size:12.5px;letter-spacing:0.2px;background:#d6d22c;color:#1e2010;-webkit-text-stroke:0.45px #1e2010;white-space:nowrap;overflow:hidden">FreeStyle 41</div><div class="a m" style="left:0;right:0;top:65.2px;height:24px;line-height:24px;text-align:center;font-size:17px;color:#dcefdc;-webkit-text-stroke:0.25px #dcefdc">0</div></div>
<div class="a" style="left:376.0px;top:347.84999999999997px;width:86.5px;height:111px;border:2px solid #5a9e2a;border-radius:7.5px;"><div class="a m" style="left:0;right:0;top:22px;height:24px;line-height:24px;text-align:center;font-size:15.5px;color:#dcefdc;-webkit-text-stroke:0.7px #dcefdc">401</div><div class="a" style="left:0;right:0;top:46px;height:15.4px;line-height:16.6px;text-align:center;font-size:12.5px;letter-spacing:0.2px;background:#4a8c22;color:#eef4e6;-webkit-text-stroke:0.45px #eef4e6;white-space:nowrap;overflow:hidden">LiteMat Spe...</div><div class="a m" style="left:0;right:0;top:65.2px;height:24px;line-height:24px;text-align:center;font-size:17px;color:#dcefdc;-webkit-text-stroke:0.25px #dcefdc">0</div></div>
<div class="a" style="left:467.75px;top:347.84999999999997px;width:86.5px;height:111px;border:2px solid #5a9e2a;border-radius:7.5px;"><div class="a m" style="left:0;right:0;top:22px;height:24px;line-height:24px;text-align:center;font-size:15.5px;color:#dcefdc;-webkit-text-stroke:0.7px #dcefdc">402</div><div class="a" style="left:0;right:0;top:46px;height:15.4px;line-height:16.6px;text-align:center;font-size:12.5px;letter-spacing:0.2px;background:#4a8c22;color:#eef4e6;-webkit-text-stroke:0.45px #eef4e6;white-space:nowrap;overflow:hidden">LiteMat Spe...</div><div class="a m" style="left:0;right:0;top:65.2px;height:24px;line-height:24px;text-align:center;font-size:17px;color:#dcefdc;-webkit-text-stroke:0.25px #dcefdc">0</div></div>
<div class="a" style="left:559.5px;top:347.84999999999997px;width:86.5px;height:111px;border:2px solid #5a9e2a;border-radius:7.5px;"><div class="a m" style="left:0;right:0;top:22px;height:24px;line-height:24px;text-align:center;font-size:15.5px;color:#dcefdc;-webkit-text-stroke:0.7px #dcefdc">403</div><div class="a" style="left:0;right:0;top:46px;height:15.4px;line-height:16.6px;text-align:center;font-size:12.5px;letter-spacing:0.2px;background:#4a8c22;color:#eef4e6;-webkit-text-stroke:0.45px #eef4e6;white-space:nowrap;overflow:hidden">LiteMat Spe...</div><div class="a m" style="left:0;right:0;top:65.2px;height:24px;line-height:24px;text-align:center;font-size:17px;color:#dcefdc;-webkit-text-stroke:0.25px #dcefdc">0</div></div>
<div class="a" style="left:651.25px;top:347.84999999999997px;width:86.5px;height:111px;border:2px solid #5a9e2a;border-radius:7.5px;"><div class="a m" style="left:0;right:0;top:22px;height:24px;line-height:24px;text-align:center;font-size:15.5px;color:#dcefdc;-webkit-text-stroke:0.7px #dcefdc">404</div><div class="a" style="left:0;right:0;top:46px;height:15.4px;line-height:16.6px;text-align:center;font-size:12.5px;letter-spacing:0.2px;background:#4a8c22;color:#eef4e6;-webkit-text-stroke:0.45px #eef4e6;white-space:nowrap;overflow:hidden">LiteMat Spe...</div><div class="a m" style="left:0;right:0;top:65.2px;height:24px;line-height:24px;text-align:center;font-size:17px;color:#dcefdc;-webkit-text-stroke:0.25px #dcefdc">0</div></div>
<div class="a" style="left:743.0px;top:347.84999999999997px;width:86.5px;height:111px;border:2px solid #2c68c0;border-radius:7.5px;"><div class="a m" style="left:0;right:0;top:22px;height:24px;line-height:24px;text-align:center;font-size:15.5px;color:#dcefdc;-webkit-text-stroke:0.7px #dcefdc">801</div><div class="a" style="left:0;right:0;top:46px;height:15.4px;line-height:16.6px;text-align:center;font-size:12.5px;letter-spacing:0.2px;background:#285ea8;color:#e6eef8;-webkit-text-stroke:0.45px #e6eef8;white-space:nowrap;overflow:hidden">Vortex8</div><div class="a m" style="left:0;right:0;top:65.2px;height:24px;line-height:24px;text-align:center;font-size:17px;color:#dcefdc;-webkit-text-stroke:0.25px #dcefdc">0</div></div>
<div class="a" style="left:834.75px;top:347.84999999999997px;width:86.5px;height:111px;border:2px solid #2c68c0;border-radius:7.5px;"><div class="a m" style="left:0;right:0;top:22px;height:24px;line-height:24px;text-align:center;font-size:15.5px;color:#dcefdc;-webkit-text-stroke:0.7px #dcefdc">802</div><div class="a" style="left:0;right:0;top:46px;height:15.4px;line-height:16.6px;text-align:center;font-size:12.5px;letter-spacing:0.2px;background:#285ea8;color:#e6eef8;-webkit-text-stroke:0.45px #e6eef8;white-space:nowrap;overflow:hidden">Vortex8</div><div class="a m" style="left:0;right:0;top:65.2px;height:24px;line-height:24px;text-align:center;font-size:17px;color:#dcefdc;-webkit-text-stroke:0.25px #dcefdc">0</div></div>
<div class="a" style="left:926.5px;top:347.84999999999997px;width:86.5px;height:111px;border:2px solid #2c68c0;border-radius:7.5px;"><div class="a m" style="left:0;right:0;top:22px;height:24px;line-height:24px;text-align:center;font-size:15.5px;color:#dcefdc;-webkit-text-stroke:0.7px #dcefdc">803</div><div class="a" style="left:0;right:0;top:46px;height:15.4px;line-height:16.6px;text-align:center;font-size:12.5px;letter-spacing:0.2px;background:#285ea8;color:#e6eef8;-webkit-text-stroke:0.45px #e6eef8;white-space:nowrap;overflow:hidden">Vortex8</div><div class="a m" style="left:0;right:0;top:65.2px;height:24px;line-height:24px;text-align:center;font-size:17px;color:#dcefdc;-webkit-text-stroke:0.25px #dcefdc">0</div></div>
<div class="a" style="left:9.0px;top:465.20000000000005px;width:86.5px;height:111px;border:2px solid #2c68c0;border-radius:7.5px;"><div class="a m" style="left:0;right:0;top:22px;height:24px;line-height:24px;text-align:center;font-size:15.5px;color:#dcefdc;-webkit-text-stroke:0.7px #dcefdc">804</div><div class="a" style="left:0;right:0;top:46px;height:15.4px;line-height:16.6px;text-align:center;font-size:12.5px;letter-spacing:0.2px;background:#285ea8;color:#e6eef8;-webkit-text-stroke:0.45px #e6eef8;white-space:nowrap;overflow:hidden">Vortex8</div><div class="a m" style="left:0;right:0;top:65.2px;height:24px;line-height:24px;text-align:center;font-size:17px;color:#dcefdc;-webkit-text-stroke:0.25px #dcefdc">0</div></div>
<div class="a" style="left:100.75px;top:465.20000000000005px;width:86.5px;height:111px;border:2px solid #2c68c0;border-radius:7.5px;"><div class="a m" style="left:0;right:0;top:22px;height:24px;line-height:24px;text-align:center;font-size:15.5px;color:#dcefdc;-webkit-text-stroke:0.7px #dcefdc">805</div><div class="a" style="left:0;right:0;top:46px;height:15.4px;line-height:16.6px;text-align:center;font-size:12.5px;letter-spacing:0.2px;background:#285ea8;color:#e6eef8;-webkit-text-stroke:0.45px #e6eef8;white-space:nowrap;overflow:hidden">Vortex8</div><div class="a m" style="left:0;right:0;top:65.2px;height:24px;line-height:24px;text-align:center;font-size:17px;color:#dcefdc;-webkit-text-stroke:0.25px #dcefdc">0</div></div>
<div class="a" style="left:192.5px;top:465.20000000000005px;width:86.5px;height:111px;border:2px solid #2c68c0;border-radius:7.5px;"><div class="a m" style="left:0;right:0;top:22px;height:24px;line-height:24px;text-align:center;font-size:15.5px;color:#dcefdc;-webkit-text-stroke:0.7px #dcefdc">806</div><div class="a" style="left:0;right:0;top:46px;height:15.4px;line-height:16.6px;text-align:center;font-size:12.5px;letter-spacing:0.2px;background:#285ea8;color:#e6eef8;-webkit-text-stroke:0.45px #e6eef8;white-space:nowrap;overflow:hidden">Vortex8</div><div class="a m" style="left:0;right:0;top:65.2px;height:24px;line-height:24px;text-align:center;font-size:17px;color:#dcefdc;-webkit-text-stroke:0.25px #dcefdc">0</div></div>
<div class="a" style="left:284.25px;top:465.20000000000005px;width:86.5px;height:111px;border:2px solid #2c68c0;border-radius:7.5px;"><div class="a m" style="left:0;right:0;top:22px;height:24px;line-height:24px;text-align:center;font-size:15.5px;color:#dcefdc;-webkit-text-stroke:0.7px #dcefdc">807</div><div class="a" style="left:0;right:0;top:46px;height:15.4px;line-height:16.6px;text-align:center;font-size:12.5px;letter-spacing:0.2px;background:#285ea8;color:#e6eef8;-webkit-text-stroke:0.45px #e6eef8;white-space:nowrap;overflow:hidden">Vortex8</div><div class="a m" style="left:0;right:0;top:65.2px;height:24px;line-height:24px;text-align:center;font-size:17px;color:#dcefdc;-webkit-text-stroke:0.25px #dcefdc">0</div></div>
<div class="a" style="left:376.0px;top:465.20000000000005px;width:86.5px;height:111px;border:2px solid #2c68c0;border-radius:7.5px;"><div class="a m" style="left:0;right:0;top:22px;height:24px;line-height:24px;text-align:center;font-size:15.5px;color:#dcefdc;-webkit-text-stroke:0.7px #dcefdc">808</div><div class="a" style="left:0;right:0;top:46px;height:15.4px;line-height:16.6px;text-align:center;font-size:12.5px;letter-spacing:0.2px;background:#285ea8;color:#e6eef8;-webkit-text-stroke:0.45px #e6eef8;white-space:nowrap;overflow:hidden">Vortex8</div><div class="a m" style="left:0;right:0;top:65.2px;height:24px;line-height:24px;text-align:center;font-size:17px;color:#dcefdc;-webkit-text-stroke:0.25px #dcefdc">0</div></div>
<div class="a" style="left:467.75px;top:465.20000000000005px;width:86.5px;height:111px;border:2px solid #2c68c0;border-radius:7.5px;"><div class="a m" style="left:0;right:0;top:22px;height:24px;line-height:24px;text-align:center;font-size:15.5px;color:#dcefdc;-webkit-text-stroke:0.7px #dcefdc">809</div><div class="a" style="left:0;right:0;top:46px;height:15.4px;line-height:16.6px;text-align:center;font-size:12.5px;letter-spacing:0.2px;background:#285ea8;color:#e6eef8;-webkit-text-stroke:0.45px #e6eef8;white-space:nowrap;overflow:hidden">Vortex8</div><div class="a m" style="left:0;right:0;top:65.2px;height:24px;line-height:24px;text-align:center;font-size:17px;color:#dcefdc;-webkit-text-stroke:0.25px #dcefdc">0</div></div>
<div class="a" style="left:559.5px;top:465.20000000000005px;width:86.5px;height:111px;border:2px solid #2c68c0;border-radius:7.5px;"><div class="a m" style="left:0;right:0;top:22px;height:24px;line-height:24px;text-align:center;font-size:15.5px;color:#dcefdc;-webkit-text-stroke:0.7px #dcefdc">810</div><div class="a" style="left:0;right:0;top:46px;height:15.4px;line-height:16.6px;text-align:center;font-size:12.5px;letter-spacing:0.2px;background:#285ea8;color:#e6eef8;-webkit-text-stroke:0.45px #e6eef8;white-space:nowrap;overflow:hidden">Vortex8</div><div class="a m" style="left:0;right:0;top:65.2px;height:24px;line-height:24px;text-align:center;font-size:17px;color:#dcefdc;-webkit-text-stroke:0.25px #dcefdc">0</div></div>
</div>
<div class="a" style="left:540px;top:150px;width:1021px;height:497px;border:5px solid #22c55e;border-radius:15px"></div>
<div class="a c" style="left:1566px;top:148px;width:54.5px;height:55.5px;background:#1e1e23;border:2px solid #22c55e;border-radius:12px;font-size:11.5px;font-weight:bold;color:#7e8595;padding-top:1px;padding-left:1px">FULL</div>
<div class="a" style="left:1570px;top:213.5px;width:49px;height:365.5px;background:#212126;border-radius:12px"></div>
<div class="a" style="left:1582px;top:218px;width:22px;height:1.4000000000000057px;background:#4e5a6c"></div>
<div class="a" style="left:1582px;top:227px;width:22px;height:1.4000000000000057px;background:#4e5a6c"></div>
<div class="a" style="left:1582px;top:236px;width:22px;height:1.4000000000000057px;background:#4e5a6c"></div>
<div class="a" style="left:1582px;top:245px;width:22px;height:1.4000000000000057px;background:#4e5a6c"></div>
<div class="a" style="left:1582px;top:254px;width:22px;height:1.4000000000000057px;background:#4e5a6c"></div>
<div class="a" style="left:1582px;top:262px;width:22px;height:1.3999999999999773px;background:#4e5a6c"></div>
<div class="a" style="left:1582px;top:271px;width:22px;height:1.3999999999999773px;background:#4e5a6c"></div>
<div class="a" style="left:1582px;top:280px;width:22px;height:1.3999999999999773px;background:#4e5a6c"></div>
<div class="a" style="left:1582px;top:289px;width:22px;height:1.3999999999999773px;background:#4e5a6c"></div>
<div class="a" style="left:1582px;top:298px;width:22px;height:1.3999999999999773px;background:#4e5a6c"></div>
<div class="a" style="left:1582px;top:307px;width:22px;height:1.3999999999999773px;background:#4e5a6c"></div>
<div class="a" style="left:1582px;top:316px;width:22px;height:1.3999999999999773px;background:#4e5a6c"></div>
<div class="a" style="left:1582px;top:325px;width:22px;height:1.3999999999999773px;background:#4e5a6c"></div>
<div class="a" style="left:1582px;top:334px;width:22px;height:1.3999999999999773px;background:#4e5a6c"></div>
<div class="a" style="left:1582px;top:342px;width:22px;height:1.3999999999999773px;background:#4e5a6c"></div>
<div class="a" style="left:1582px;top:351px;width:22px;height:1.3999999999999773px;background:#4e5a6c"></div>
<div class="a" style="left:1582px;top:360px;width:22px;height:1.3999999999999773px;background:#4e5a6c"></div>
<div class="a" style="left:1582px;top:369px;width:22px;height:1.3999999999999773px;background:#4e5a6c"></div>
<div class="a" style="left:1582px;top:378px;width:22px;height:1.3999999999999773px;background:#4e5a6c"></div>
<div class="a" style="left:1582px;top:387px;width:22px;height:1.3999999999999773px;background:#4e5a6c"></div>
<div class="a" style="left:1582px;top:405px;width:22px;height:1.3999999999999773px;background:#4e5a6c"></div>
<div class="a" style="left:1582px;top:414px;width:22px;height:1.3999999999999773px;background:#4e5a6c"></div>
<div class="a" style="left:1582px;top:422px;width:22px;height:1.3999999999999773px;background:#4e5a6c"></div>
<div class="a" style="left:1582px;top:431px;width:22px;height:1.3999999999999773px;background:#4e5a6c"></div>
<div class="a" style="left:1582px;top:440px;width:22px;height:1.3999999999999773px;background:#4e5a6c"></div>
<div class="a" style="left:1582px;top:449px;width:22px;height:1.3999999999999773px;background:#4e5a6c"></div>
<div class="a" style="left:1582px;top:458px;width:22px;height:1.3999999999999773px;background:#4e5a6c"></div>
<div class="a" style="left:1582px;top:467px;width:22px;height:1.3999999999999773px;background:#4e5a6c"></div>
<div class="a" style="left:1582px;top:476px;width:22px;height:1.3999999999999773px;background:#4e5a6c"></div>
<div class="a" style="left:1582px;top:485px;width:22px;height:1.3999999999999773px;background:#4e5a6c"></div>
<div class="a" style="left:1582px;top:494px;width:22px;height:1.3999999999999773px;background:#4e5a6c"></div>
<div class="a" style="left:1582px;top:502px;width:22px;height:1.3999999999999773px;background:#4e5a6c"></div>
<div class="a" style="left:1582px;top:511px;width:22px;height:1.3999999999999773px;background:#4e5a6c"></div>
<div class="a" style="left:1582px;top:520px;width:22px;height:1.3999999999999773px;background:#4e5a6c"></div>
<div class="a" style="left:1582px;top:529px;width:22px;height:1.3999999999999773px;background:#4e5a6c"></div>
<div class="a" style="left:1582px;top:538px;width:22px;height:1.3999999999999773px;background:#4e5a6c"></div>
<div class="a" style="left:1582px;top:547px;width:22px;height:1.3999999999999773px;background:#4e5a6c"></div>
<div class="a" style="left:1582px;top:556px;width:22px;height:1.3999999999999773px;background:#4e5a6c"></div>
<div class="a" style="left:1582px;top:565px;width:22px;height:1.3999999999999773px;background:#4e5a6c"></div>
<div class="a" style="left:1582px;top:574px;width:22px;height:1.3999999999999773px;background:#4e5a6c"></div>
<div class="a" style="left:1574.5px;top:393px;width:37.5px;height:5.5px;background:#a0a4ac;border-radius:3px"></div>
<div class="a c" style="left:1566px;top:586.5px;width:54.5px;height:55.5px;background:#1e1e23;border:2px solid #ef4444;border-radius:12px;font-size:11.5px;font-weight:bold;color:#7e8595;padding-left:1px;padding-bottom:1px">OUT</div>
<div class="a" style="left:1564px;top:149px;width:62px;height:496px;border:5px solid #fff;border-radius:15px"></div>
<div class="a" style="left:535px;top:651px;width:1094px;height:294px;background:#26262b;border-radius:16px"></div>
<div class="a" style="left:1055px;top:662px;width:48px;height:4px;background:#56565c;border-radius:2px"></div>
<svg style="left:549px;top:655px" width="13" height="17" viewBox="0 0 13 17"><path d="M4 11.3 A4.7 4.7 0 1 1 9 11.3 Z" stroke="#f0f0f4" stroke-width="1.5" fill="none" stroke-linejoin="round"/><path d="M4.3 13.5 H8.7 M5.3 15.4 H7.7" stroke="#f0f0f4" stroke-width="1.3" stroke-linecap="round"/></svg>
<div class="a l" style="left:567.5px;top:649.5px;height:30px;line-height:30px;font-size:12px;color:#e4e4ea">DMX Tester</div>
<div class="a" style="left:547px;top:678.5px;width:824.5px;height:38.5px;background:#2f2f35;border-radius:12px"></div>
<div class="a l" style="left:561.2px;top:687.0px;height:24px;line-height:24px;font-family:Liberation Mono,monospace;font-size:16px;font-weight:bold;color:#f4f4f8;transform-origin:0 50%;transform:scaleX(0.9597)">Fixture 205 Thru 207</div>
<div class="a" style="left:1376px;top:678.5px;width:74px;height:38.5px;background:#36363c;border-radius:11px"></div>
<div class="a" style="left:1455px;top:678.5px;width:73px;height:38.5px;background:#36363c;border-radius:11px"></div>
<div class="a" style="left:1533px;top:678.5px;width:74px;height:38.5px;background:#36363c;border-radius:11px"></div>
<svg style="left:1407px;top:690px" width="10" height="16" viewBox="0 0 10 16"><path d="M8 1.5 L2 8 L8 14.5" stroke="#f4f4f8" stroke-width="2.2" fill="none" stroke-linecap="round" stroke-linejoin="round"/></svg>
<svg style="left:1486px;top:690px" width="10" height="16" viewBox="0 0 10 16"><path d="M2 1.5 L8 8 L2 14.5" stroke="#f4f4f8" stroke-width="2.2" fill="none" stroke-linecap="round" stroke-linejoin="round"/></svg>
<svg style="left:1557px;top:685px" width="26" height="26" viewBox="0 0 26 26"><circle cx="13" cy="13" r="11.3" stroke="#3b82f6" stroke-width="2.2" fill="none"/><path d="M13 6.5 L19 12.5 H15.5 V18.5 H10.5 V12.5 H7 Z" fill="#3b82f6"/></svg>
<div class="a c" style="left:547px;top:733.5px;width:104px;height:38.0px;background:#36363c;border-radius:11px;font-size:15px;color:#f4f4f8;padding-bottom:1.5px;border:2px solid #22c55e;font-weight:bold">Update</div>
<div class="a c" style="left:655.5px;top:733.5px;width:96.5px;height:38.0px;background:#36363c;border-radius:11px;font-size:15px;color:#f4f4f8;padding-bottom:1.5px;border:2px solid #ef4444;font-weight:bold">Rec</div>
<div class="a c" style="left:756.5px;top:733.5px;width:105.0px;height:38.0px;background:#36363c;border-radius:11px;font-size:15px;color:#6b7080;padding-bottom:1.5px;border:2px solid #3b82f6;font-weight:bold">Go</div>
<div class="a c" style="left:547px;top:776.2px;width:78px;height:34.19999999999993px;background:#36363c;border-radius:11px;font-size:15px;color:#6b7080;padding-bottom:1.5px;">Look</div>
<div class="a c" style="left:629.3px;top:776.2px;width:74.70000000000005px;height:34.19999999999993px;background:#36363c;border-radius:11px;font-size:15px;color:#6b7080;padding-bottom:1.5px;">Group</div>
<div class="a c" style="left:708.4px;top:776.2px;width:74.10000000000002px;height:34.19999999999993px;background:#36363c;border-radius:11px;font-size:15px;color:#6b7080;padding-bottom:1.5px;">Macro</div>
<div class="a c" style="left:786.8px;top:776.2px;width:74.60000000000002px;height:34.19999999999993px;background:#36363c;border-radius:11px;font-size:15px;color:#f4f4f8;padding-bottom:1.5px;">Copy</div>
<div class="a c" style="left:547px;top:815px;width:78px;height:34px;background:#36363c;border-radius:11px;font-size:15px;color:#6b7080;padding-bottom:1.5px;">Favorite</div>
<div class="a c" style="left:629.3px;top:815px;width:74.70000000000005px;height:34px;background:#36363c;border-radius:11px;font-size:15px;color:#6b7080;padding-bottom:1.5px;">Effect</div>
<div class="a c" style="left:708.4px;top:815px;width:74.10000000000002px;height:34px;background:#36363c;border-radius:11px;font-size:15px;color:#6b7080;padding-bottom:1.5px;">Fader</div>
<div class="a c" style="left:786.8px;top:815px;width:74.60000000000002px;height:34px;background:#36363c;border-radius:11px;font-size:15px;color:#f4f4f8;padding-bottom:1.5px;">Recall</div>
<div class="a c" style="left:547px;top:854px;width:78px;height:33.799999999999955px;background:#36363c;border-radius:11px;font-size:15px;color:#f4f4f8;padding-bottom:1.5px;">Col Tmp</div>
<div class="a c" style="left:629.3px;top:854px;width:74.70000000000005px;height:33.799999999999955px;background:#36363c;border-radius:11px;font-size:15px;color:#f4f4f8;padding-bottom:1.5px;">Tint</div>
<div class="a c" style="left:708.4px;top:854px;width:74.10000000000002px;height:33.799999999999955px;background:#36363c;border-radius:11px;font-size:15px;color:#f4f4f8;padding-bottom:1.5px;">Col Xfd</div>
<div class="a c" style="left:786.8px;top:854px;width:74.60000000000002px;height:33.799999999999955px;background:#36363c;border-radius:11px;font-size:15px;color:#6b7080;padding-bottom:1.5px;">Swap</div>
<div class="a c" style="left:870px;top:733.5px;width:102px;height:37.5px;background:#3a3a40;border-radius:11px;font-size:15px;color:#f4f4f8;padding-bottom:1.5px;">7</div>
<div class="a c" style="left:976px;top:733.5px;width:98px;height:37.5px;background:#3a3a40;border-radius:11px;font-size:15px;color:#f4f4f8;padding-bottom:1.5px;">8</div>
<div class="a c" style="left:1078.3px;top:733.5px;width:97.70000000000005px;height:37.5px;background:#3a3a40;border-radius:11px;font-size:15px;color:#f4f4f8;padding-bottom:1.5px;">9</div>
<div class="a c" style="left:1185px;top:733.5px;width:76.29999999999995px;height:37.5px;background:#36363c;border-radius:11px;font-size:15px;color:#f4f4f8;padding-bottom:1.5px;">+</div>
<div class="a c" style="left:1266px;top:733.5px;width:72px;height:37.5px;background:#36363c;border-radius:11px;font-size:15px;color:#6b7080;padding-bottom:1.5px;">Home</div>
<div class="a c" style="left:1342.6px;top:733.5px;width:71.70000000000005px;height:37.5px;background:#36363c;border-radius:11px;font-size:15px;color:#f4f4f8;padding-bottom:1.5px;">Freeze</div>
<div class="a c" style="left:1419px;top:733.5px;width:72.29999999999995px;height:37.5px;background:#36363c;border-radius:11px;font-size:15px;color:#f4f4f8;padding-bottom:1.5px;">Delete</div>
<div class="a c" style="left:870px;top:776.2px;width:102px;height:34.19999999999993px;background:#3a3a40;border-radius:11px;font-size:15px;color:#f4f4f8;padding-bottom:1.5px;">4</div>
<div class="a c" style="left:976px;top:776.2px;width:98px;height:34.19999999999993px;background:#3a3a40;border-radius:11px;font-size:15px;color:#f4f4f8;padding-bottom:1.5px;">5</div>
<div class="a c" style="left:1078.3px;top:776.2px;width:97.70000000000005px;height:34.19999999999993px;background:#3a3a40;border-radius:11px;font-size:15px;color:#f4f4f8;padding-bottom:1.5px;">6</div>
<div class="a c" style="left:1185px;top:776.2px;width:76.29999999999995px;height:34.19999999999993px;background:#36363c;border-radius:11px;font-size:15px;color:#f4f4f8;padding-bottom:1.5px;">-</div>
<div class="a c" style="left:1266px;top:776.2px;width:72px;height:34.19999999999993px;background:#36363c;border-radius:11px;font-size:15px;color:#6b7080;padding-bottom:1.5px;">Release</div>
<div class="a c" style="left:1342.6px;top:776.2px;width:71.70000000000005px;height:34.19999999999993px;background:#36363c;border-radius:11px;font-size:15px;color:#6b7080;padding-bottom:1.5px;">Select</div>
<div class="a c" style="left:1419px;top:776.2px;width:72.29999999999995px;height:34.19999999999993px;background:#36363c;border-radius:11px;font-size:15px;color:#f4f4f8;padding-bottom:1.5px;">Offset</div>
<div class="a c" style="left:870px;top:815px;width:102px;height:34px;background:#3a3a40;border-radius:11px;font-size:15px;color:#f4f4f8;padding-bottom:1.5px;">1</div>
<div class="a c" style="left:976px;top:815px;width:98px;height:34px;background:#3a3a40;border-radius:11px;font-size:15px;color:#f4f4f8;padding-bottom:1.5px;">2</div>
<div class="a c" style="left:1078.3px;top:815px;width:97.70000000000005px;height:34px;background:#3a3a40;border-radius:11px;font-size:15px;color:#f4f4f8;padding-bottom:1.5px;">3</div>
<div class="a c" style="left:1185px;top:815px;width:76.29999999999995px;height:34px;background:#36363c;border-radius:11px;font-size:15px;color:#6b7080;padding-bottom:1.5px;">Thru</div>
<div class="a c" style="left:1266px;top:815px;width:72px;height:34px;background:#36363c;border-radius:11px;font-size:15px;color:#f4f4f8;padding-bottom:1.5px;">Out</div>
<div class="a c" style="left:1342.6px;top:815px;width:71.70000000000005px;height:34px;background:#36363c;border-radius:11px;font-size:15px;color:#6b7080;padding-bottom:1.5px;">if</div>
<div class="a c" style="left:1419px;top:815px;width:72.29999999999995px;height:34px;background:#36363c;border-radius:11px;font-size:15px;color:#6b7080;padding-bottom:1.5px;">Align</div>
<div class="a c" style="left:870px;top:854px;width:102px;height:33.799999999999955px;background:#3a3a40;border-radius:11px;font-size:15px;color:#f4f4f8;padding-bottom:1.5px;"></div>
<div class="a c" style="left:976px;top:854px;width:98px;height:33.799999999999955px;background:#3a3a40;border-radius:11px;font-size:15px;color:#f4f4f8;padding-bottom:1.5px;">0</div>
<div class="a c" style="left:1078.3px;top:854px;width:97.70000000000005px;height:33.799999999999955px;background:#3a3a40;border-radius:11px;font-size:15px;color:#6b7080;padding-bottom:1.5px;">/</div>
<div class="a c" style="left:1185px;top:854px;width:76.29999999999995px;height:33.799999999999955px;background:#36363c;border-radius:11px;font-size:15px;color:#f4f4f8;padding-bottom:1.5px;">At</div>
<div class="a c" style="left:1266px;top:854px;width:72px;height:33.799999999999955px;background:#36363c;border-radius:11px;font-size:15px;color:#f4f4f8;padding-bottom:1.5px;">Full</div>
<div class="a c" style="left:1342.6px;top:854px;width:71.70000000000005px;height:33.799999999999955px;background:#36363c;border-radius:11px;font-size:15px;color:#f4f4f8;padding-bottom:1.5px;">Time</div>
<div class="a c" style="left:1419px;top:854px;width:72.29999999999995px;height:33.799999999999955px;background:#36363c;border-radius:11px;font-size:15px;color:#6b7080;padding-bottom:1.5px;">ON</div>
<div class="a" style="left:916.8px;top:869.7px;width:7.6px;height:7.6px;border-radius:50%;background:#f4f4f8"></div>
<div class="a c" style="left:1496px;top:733.5px;width:115px;height:76.5px;background:#36363c;border-radius:11px;font-size:13px;color:#f4f4f8;padding-bottom:1.5px;-webkit-text-stroke:0.2px #fff">CLEAR</div>
<div class="a c" style="left:1496px;top:814.3px;width:115px;height:73.30000000000007px;background:linear-gradient(105deg,#1f90e4,#2b3ee9);border-radius:11px;font-size:13px;color:#f4f4f8;padding-bottom:1.5px;-webkit-text-stroke:0.3px #fff">ENTER</div>
<div class="a c" style="left:546px;top:896px;width:177.39999999999998px;height:37px;background:#3a3a40;border-radius:11px;font-size:11.3px;color:#f0f0f4;padding-bottom:1.5px;border:2px solid #e6e01e">INTENSITY</div>
<div class="a c" style="left:731.5px;top:896px;width:169.5px;height:37px;background:#3a3a40;border-radius:11px;font-size:11.3px;color:#f0f0f4;padding-bottom:1.5px;border:2px solid #e6e01e">FOCUS</div>
<div class="a c" style="left:909.4px;top:896px;width:168.60000000000002px;height:37px;background:#3a3a40;border-radius:11px;font-size:11.3px;color:#f0f0f4;padding-bottom:1.5px;border:2px solid #e6e01e">COLOR</div>
<div class="a c" style="left:1087px;top:896px;width:168.5px;height:37px;background:#3a3a40;border-radius:11px;font-size:11.3px;color:#f0f0f4;padding-bottom:1.5px;border:2px solid #e6e01e">BEAM</div>
<div class="a c" style="left:1264px;top:896px;width:169px;height:37px;background:#3a3a40;border-radius:11px;font-size:11.3px;color:#f0f0f4;padding-bottom:1.5px;border:2px solid #e6e01e">SHUTTER</div>
<div class="a c" style="left:1442px;top:896px;width:169px;height:37px;background:#3a3a40;border-radius:11px;font-size:11.3px;color:#f0f0f4;padding-bottom:1.5px;border:2px solid #e6e01e">CONTROL</div>
<div class="a" style="left:540px;top:651px;width:1089px;height:294px;border:5px solid #ef4444;border-radius:15px"></div>
<div class="a" style="left:280.5px;top:952.5px;width:55.0px;height:47.5px;background:#1e1e23;border-radius:50%"></div>
<svg style="left:297px;top:964px" width="22" height="24" viewBox="0 0 22 24"><circle cx="10.7" cy="4.3" r="2.3" stroke="#e8e8ee" stroke-width="1.6" fill="none"/><path d="M10.7 6.6 V13.5" stroke="#e8e8ee" stroke-width="1.7" stroke-linecap="round"/><path d="M8.4 10.7 H6.7 A4 4 0 0 0 2.7 14.7 V17.6 A4 4 0 0 0 6.7 21.6 H15.3 A4 4 0 0 0 19.3 17.6 V14.7 A4 4 0 0 0 15.3 10.7 H13 M2.9 17.6 H19.1" stroke="#e8e8ee" stroke-width="1.6" fill="none" stroke-linecap="round"/></svg>
<div class="a" style="left:343px;top:952.5px;width:1216px;height:47.5px;background:#1d1d22;border-radius:24px"></div>
<div class="a c" style="left:348px;top:957.7px;width:241px;height:38.09999999999991px;background:#2b4f8e;border-radius:19px;font-size:18px;color:#f4f4f8">Fixtures</div>
<div class="a l" style="left:671px;top:961.5px;height:30px;line-height:30px;font-size:18px;color:#f0f0f4">Faders</div>
<div class="a c" style="left:736.3px;top:966px;width:19.700000000000045px;height:20.600000000000023px;background:#263f6e;border-radius:5px;font-size:11px;font-weight:bold;color:#dfe6f4">P1</div>
<div class="a l" style="left:802.0px;width:300px;text-align:center;top:961.5px;height:30px;line-height:30px;font-size:18px;color:#f0f0f4">LivePlot</div>
<div class="a l" style="left:1043.0px;width:300px;text-align:center;top:961.5px;height:30px;line-height:30px;font-size:18px;color:#f0f0f4">Encoders</div>
<div class="a l" style="left:1284.0px;width:300px;text-align:center;top:961.5px;height:30px;line-height:30px;font-size:18px;color:#f0f0f4">Patch</div>
<div class="a" style="left:1567.5px;top:952.5px;width:55.5px;height:47.5px;background:#1a1a1f;border:1.5px solid #242429;border-radius:50%"></div>
<svg style="left:1586px;top:969px" width="20" height="16" viewBox="0 0 20 16"><g fill="#3b8df6"><rect x="0" y="0.4" width="3.3" height="3.3" rx="0.5"/><rect x="5" y="0.4" width="3.3" height="3.3" rx="0.5"/><rect x="10" y="0.4" width="3.3" height="3.3" rx="0.5"/><rect x="15" y="0.4" width="3.3" height="3.3" rx="0.5"/><rect x="0" y="5.8" width="3.3" height="3.3" rx="0.5"/><rect x="5" y="5.8" width="3.3" height="3.3" rx="0.5"/><rect x="10" y="5.8" width="3.3" height="3.3" rx="0.5"/><rect x="15" y="5.8" width="3.3" height="3.3" rx="0.5"/><rect x="3.3" y="12.2" width="12" height="2.2" rx="1"/></g></svg>
<svg style="left:1604px;top:995px" width="30" height="26" viewBox="0 0 30 26"><path d="M24.8 3 A24 24 0 0 1 4.9 23.8" stroke="#8c8c90" stroke-width="3" fill="none" stroke-linecap="round"/></svg>
<div class="a" style="left:540px;top:90px;width:1089px;height:58px;border:5px solid #f97316;border-radius:15px"></div>
<div class="a" style="left:274px;top:97px;width:258px;height:165px;border:5px solid #3b82f6;border-radius:15px"></div>
<div class="a" style="left:274px;top:266px;width:258px;height:679px;border:5px solid #eab308;border-radius:16px"></div>
<div class="a" style="left:256px;top:178px;width:19px;height:2px;background:#3b82f6"></div>
<div class="a" style="left:256px;top:524px;width:19px;height:2px;background:#eab308"></div>
<div class="a" style="left:1628px;top:118px;width:51px;height:2px;background:#f97316"></div>
<div class="a" style="left:1625px;top:397.5px;width:32px;height:2.0px;background:#eeeefa"></div>
<div class="a" style="left:1628px;top:794px;width:29px;height:2px;background:#ef4444"></div>
<div class="a" style="left:88px;top:134px;width:168px;height:92px;background:#3b82f6;border-radius:9px"></div>
<div class="a l" style="left:116px;top:142.0px;height:40px;line-height:40px;font-size:24px;color:#111;-webkit-text-stroke:0.5px #111;transform-origin:0 50%;transform:scaleX(1.0840)">4. Sidebar</div>
<div class="a l" style="left:119.5px;top:177.5px;height:40px;line-height:40px;font-size:24px;color:#111;-webkit-text-stroke:0.5px #111;transform-origin:0 50%;transform:scaleX(1.1205)">Navigator</div>
<div class="a" style="left:88px;top:498px;width:168px;height:56px;background:#eab308;border-radius:9px"></div>
<div class="a l" style="left:116px;top:505.0px;height:40px;line-height:40px;font-size:24px;color:#111;-webkit-text-stroke:0.5px #111;transform-origin:0 50%;transform:scaleX(1.0840)">5. Sidebar</div>
<div class="a" style="left:1678.5px;top:92px;width:214.5px;height:55px;background:#f97316;border-radius:9px"></div>
<div class="a l" style="left:1707.8px;top:99.5px;height:40px;line-height:40px;font-size:24px;color:#111;-webkit-text-stroke:0.5px #111;transform-origin:0 50%;transform:scaleX(1.0947)">2. Top Navbar</div>
<div class="a" style="left:1656px;top:335.5px;width:214.5px;height:127.0px;background:#eeeefa;border-radius:9px"></div>
<div class="a l" style="left:1684.4px;top:343.0px;height:40px;line-height:40px;font-size:24px;color:#111;-webkit-text-stroke:0.5px #111;transform-origin:0 50%;transform:scaleX(1.0430)">3. Level Wheel</div>
<div class="a l" style="left:1613.0px;width:300px;text-align:center;top:385.0px;height:30px;line-height:30px;font-size:24px;color:#111;-webkit-text-stroke:0.5px #111">&amp;</div>
<div class="a l" style="left:1685.6px;top:415.0px;height:40px;line-height:40px;font-size:24px;color:#111;-webkit-text-stroke:0.5px #111;transform-origin:0 50%;transform:scaleX(1.0610)">Flash Buttons</div>
<div class="a" style="left:1656px;top:751px;width:212px;height:92px;background:#ef4444;border-radius:9px"></div>
<div class="a l" style="left:1684px;top:758.7px;height:40px;line-height:40px;font-size:24px;color:#111;-webkit-text-stroke:0.5px #111;transform-origin:0 50%;transform:scaleX(1.1427)">6. Command</div>
<div class="a l" style="left:1717.3px;top:794.8px;height:40px;line-height:40px;font-size:24px;color:#111;-webkit-text-stroke:0.5px #111;transform-origin:0 50%;transform:scaleX(1.0994)">Keypad</div>
<div class="a" style="left:951px;top:343px;width:166px;height:56px;background:#22c55e;border-radius:9px"></div>
<div class="a l" style="left:985.8px;top:350.5px;height:40px;line-height:40px;font-size:24px;color:#111;-webkit-text-stroke:0.5px #111;transform-origin:0 50%;transform:scaleX(0.9747)">1. Fixtures</div></body></html>
